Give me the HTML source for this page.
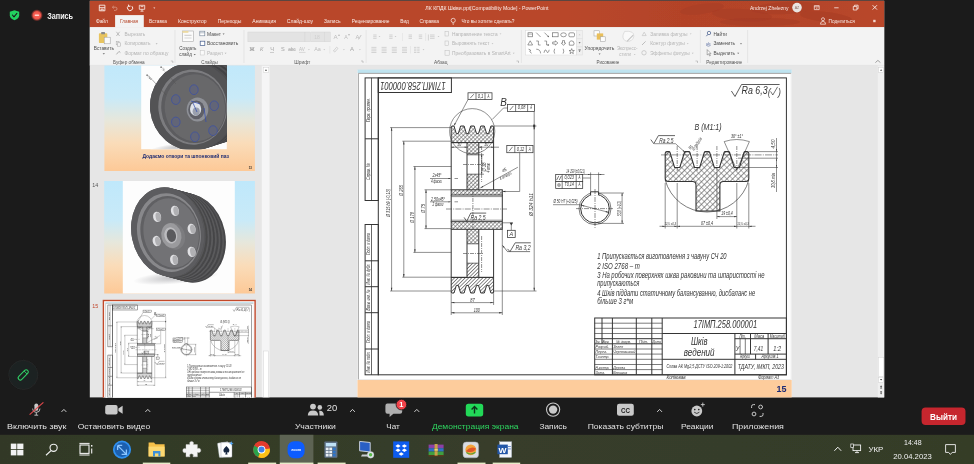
<!DOCTYPE html>
<html lang="ru"><head><meta charset="utf-8"><title>Zoom - PowerPoint</title>
<style>
html,body{margin:0;padding:0;background:#1b1b1b;overflow:hidden}
svg{display:block;font-family:'Liberation Sans', sans-serif}
text{font-family:"Liberation Sans",sans-serif}
</style></head><body>
<svg width="974" height="464" viewBox="0 0 974 464">
<rect x="0.0" y="0.0" width="974.0" height="464.0" fill="#1b1b1b" />
<defs><filter id="soft" x="0" y="0" width="974" height="464" filterUnits="userSpaceOnUse"><feGaussianBlur stdDeviation="0.45"/></filter><filter id="soft2" x="0" y="0" width="974" height="464" filterUnits="userSpaceOnUse"><feGaussianBlur stdDeviation="0.3"/></filter></defs>
<g id="ppt" filter="url(#soft)">
<rect x="89.8" y="0.8" width="794.4" height="396.6" fill="#e6e6e6" />
<defs><linearGradient id="tb" x1="0" x2="1"><stop offset="0" stop-color="#b9472b"/><stop offset="0.6" stop-color="#b9472b"/><stop offset="0.75" stop-color="#b34328"/><stop offset="0.92" stop-color="#b54529"/><stop offset="1" stop-color="#b9472b"/></linearGradient></defs>
<rect x="89.8" y="0.8" width="794.4" height="26.4" fill="url(#tb)" />
<ellipse cx="702" cy="9" rx="22" ry="5" fill="#a53d24" opacity="0.55" transform="rotate(-8 702 9)"/>
<ellipse cx="742" cy="15" rx="30" ry="6" fill="#a53d24" opacity="0.55" transform="rotate(4 742 15)"/>
<ellipse cx="786" cy="8" rx="34" ry="6" fill="#a53d24" opacity="0.55" transform="rotate(-3 786 8)"/>
<ellipse cx="826" cy="17" rx="26" ry="5" fill="#a53d24" opacity="0.55" transform="rotate(6 826 17)"/>
<ellipse cx="760" cy="22" rx="40" ry="4" fill="#a53d24" opacity="0.55" transform="rotate(0 760 22)"/>
<path d="M99.3 5.2H104.9V10.8H99.3Z M99.3 7.7H104.9 M101 10.8V9.2H103.2V10.8" fill="none" stroke="#fbeee9" stroke-width="0.9" />
<path d="M112.5 7.2H115.4Q117 7.2 117 8.8Q117 10.4 115.4 10.4H114 M113.8 5.9L112.4 7.2L113.8 8.5" fill="none" stroke="#d99a88" stroke-width="0.8" />
<path d="M131.9 6.2A2.6 2.6 0 1 1 128.6 5.9 M128.4 4.6L128.7 6.4L130.5 6.1" fill="none" stroke="#fbeee9" stroke-width="1" />
<path d="M139.3 5.3H144.7V9.3H139.3Z M142 9.3V11 M140.5 11.2H143.5 M140.6 6.6H143.4" fill="none" stroke="#fbeee9" stroke-width="0.8" />
<path d="M153.3 7.6H155.3L154.3 8.8Z" fill="#fbeee9" stroke="none" stroke-width="0.6" />
<text x="425.3" y="10.1" font-size="5.6" fill="#fbeee9" textLength="123.2" lengthAdjust="spacingAndGlyphs" >ЛК КПДК Шківи.ppt[Compatibility Mode]  -  PowerPoint</text>
<text x="750.0" y="9.9" font-size="5.6" fill="#fbeee9" textLength="38.6" lengthAdjust="spacingAndGlyphs" >Andrzej Zhelezny</text>
<circle cx="797.0" cy="7.6" r="4.8" fill="#e9e4e1" />
<text x="797.0" y="9.2" font-size="3.6" fill="#8a6a60" text-anchor="middle" >AZ</text>
<path d="M814.3 5.6H819.2V9.6H814.3Z M814.3 6.8H819.2 M816.8 7.6V9" fill="none" stroke="#fbeee9" stroke-width="0.7" />
<line x1="834.2" y1="7.8" x2="838.6" y2="7.8" stroke="#fbeee9" stroke-width="0.8" />
<path d="M853.3 6.4H856.9V10H853.3Z M854.5 6.4V5.2H858.1V8.8H856.9" fill="none" stroke="#fbeee9" stroke-width="0.8" />
<path d="M872.6 5.2L877 9.6M877 5.2L872.6 9.6" fill="none" stroke="#fbeee9" stroke-width="0.9" />
<rect x="115.1" y="15.1" width="28.7" height="12.5" fill="#f3f3f3" />
<text x="95.9" y="23.4" font-size="5.5" fill="#fbeee9" textLength="12.1" lengthAdjust="spacingAndGlyphs" >Файл</text>
<text x="120.0" y="23.4" font-size="5.5" fill="#b7472a" textLength="18.1" lengthAdjust="spacingAndGlyphs" >Главная</text>
<text x="149.1" y="23.4" font-size="5.5" fill="#fbeee9" textLength="17.7" lengthAdjust="spacingAndGlyphs" >Вставка</text>
<text x="178.0" y="23.4" font-size="5.5" fill="#fbeee9" textLength="28.6" lengthAdjust="spacingAndGlyphs" >Конструктор</text>
<text x="217.7" y="23.4" font-size="5.5" fill="#fbeee9" textLength="23.8" lengthAdjust="spacingAndGlyphs" >Переходы</text>
<text x="252.3" y="23.4" font-size="5.5" fill="#fbeee9" textLength="23.8" lengthAdjust="spacingAndGlyphs" >Анимация</text>
<text x="286.8" y="23.4" font-size="5.5" fill="#fbeee9" textLength="26.3" lengthAdjust="spacingAndGlyphs" >Слайд-шоу</text>
<text x="324.1" y="23.4" font-size="5.5" fill="#fbeee9" textLength="16.4" lengthAdjust="spacingAndGlyphs" >Запись</text>
<text x="351.7" y="23.4" font-size="5.5" fill="#fbeee9" textLength="37.8" lengthAdjust="spacingAndGlyphs" >Рецензирование</text>
<text x="400.2" y="23.4" font-size="5.5" fill="#fbeee9" textLength="8.7" lengthAdjust="spacingAndGlyphs" >Вид</text>
<text x="419.6" y="23.4" font-size="5.5" fill="#fbeee9" textLength="19.4" lengthAdjust="spacingAndGlyphs" >Справка</text>
<text x="461.4" y="23.4" font-size="5.5" fill="#fbeee9" textLength="53.1" lengthAdjust="spacingAndGlyphs" >Что вы хотите сделать?</text>
<circle cx="453.2" cy="20.4" r="2.1" fill="none" stroke="#fbeee9" stroke-width="0.7" />
<path d="M452.3 23.2H454.2M452.6 24.4H453.9" fill="none" stroke="#fbeee9" stroke-width="0.6" />
<circle cx="823.0" cy="19.2" r="1.5" fill="none" stroke="#fbeee9" stroke-width="0.7" />
<path d="M820.4 24.2Q820.4 21.4 823 21.4Q825.6 21.4 825.6 24.2Z" fill="none" stroke="#fbeee9" stroke-width="0.7" />
<text x="828.6" y="22.9" font-size="5.5" fill="#fbeee9" textLength="26.1" lengthAdjust="spacingAndGlyphs" >Поделиться</text>
<rect x="873.2" y="19.8" width="2.4" height="2.4" fill="#f3d9cf" />
<rect x="89.8" y="27.2" width="794.4" height="38.0" fill="#f3f3f3" />
<line x1="89.8" y1="65.3" x2="884.2" y2="65.3" stroke="#e0e0e0" stroke-width="0.6" />
<line x1="175.0" y1="30.0" x2="175.0" y2="63.0" stroke="#dcdcdc" stroke-width="0.6" />
<line x1="244.0" y1="30.0" x2="244.0" y2="63.0" stroke="#dcdcdc" stroke-width="0.6" />
<line x1="366.1" y1="30.0" x2="366.1" y2="63.0" stroke="#dcdcdc" stroke-width="0.6" />
<line x1="521.4" y1="30.0" x2="521.4" y2="63.0" stroke="#dcdcdc" stroke-width="0.6" />
<line x1="700.4" y1="30.0" x2="700.4" y2="63.0" stroke="#dcdcdc" stroke-width="0.6" />
<line x1="747.6" y1="30.0" x2="747.6" y2="63.0" stroke="#dcdcdc" stroke-width="0.6" />
<text x="113.0" y="64.0" font-size="4.9" fill="#555" textLength="31.7" lengthAdjust="spacingAndGlyphs" >Буфер обмена</text>
<text x="201.3" y="64.0" font-size="4.9" fill="#555" textLength="16.5" lengthAdjust="spacingAndGlyphs" >Слайды</text>
<text x="294.2" y="64.0" font-size="4.9" fill="#555" textLength="16.1" lengthAdjust="spacingAndGlyphs" >Шрифт</text>
<text x="434.0" y="64.0" font-size="4.9" fill="#555" textLength="13.5" lengthAdjust="spacingAndGlyphs" >Абзац</text>
<text x="596.4" y="64.0" font-size="4.9" fill="#555" textLength="22.9" lengthAdjust="spacingAndGlyphs" >Рисование</text>
<text x="706.2" y="64.0" font-size="4.9" fill="#555" textLength="36.0" lengthAdjust="spacingAndGlyphs" >Редактирование</text>
<path d="M170.8 61H172.8V63" fill="none" stroke="#999" stroke-width="0.5" />
<path d="M361 61H363V63" fill="none" stroke="#999" stroke-width="0.5" />
<path d="M516.5 61H518.5V63" fill="none" stroke="#999" stroke-width="0.5" />
<path d="M695.5 61H697.5V63" fill="none" stroke="#999" stroke-width="0.5" />
<rect x="98.9" y="33.2" width="8.4" height="9.8" fill="#e8c45e" rx="0.8" />
<rect x="101.2" y="32.0" width="3.8" height="2.2" fill="#8a8a8a" rx="0.5" />
<rect x="104.2" y="37.2" width="6.0" height="6.6" fill="#fafafa" stroke="#9a9a9a" stroke-width="0.5" />
<text x="93.7" y="50.0" font-size="5.5" fill="#4a4a4a" textLength="20.3" lengthAdjust="spacingAndGlyphs" >Вставить</text>
<path d="M102.6 53.2H105L103.8 54.6Z" fill="#666" stroke="none" stroke-width="0.6" />
<path d="M116.4 31.8L119.6 36M119.6 31.8L116.4 36" fill="none" stroke="#9a9a9a" stroke-width="0.6" />
<text x="124.5" y="35.6" font-size="5.5" fill="#b4b4b4" textLength="20.7" lengthAdjust="spacingAndGlyphs" >Вырезать</text>
<rect x="116.2" y="41.4" width="2.8" height="3.4" fill="none" stroke="#a8a8a8" stroke-width="0.5" />
<rect x="117.6" y="42.8" width="2.8" height="3.4" fill="#f3f3f3" stroke="#a8a8a8" stroke-width="0.5" />
<text x="124.5" y="45.1" font-size="5.5" fill="#b4b4b4" textLength="25.9" lengthAdjust="spacingAndGlyphs" >Копировать</text>
<path d="M155.6 43.2H157.6L156.6 44.4Z" fill="#b4b4b4" stroke="none" stroke-width="0.6" />
<path d="M116.4 54.4L119 51.4L120.4 52.6" fill="none" stroke="#a8a8a8" stroke-width="0.9" />
<text x="124.5" y="54.8" font-size="5.5" fill="#b4b4b4" textLength="44.0" lengthAdjust="spacingAndGlyphs" >Формат по образцу</text>
<rect x="182.4" y="31.0" width="11.2" height="10.6" fill="#fbfbfb" stroke="#a9a9a9" stroke-width="0.6" />
<rect x="182.4" y="31.0" width="6.0" height="1.8" fill="#ecd9a0" />
<line x1="184.4" y1="35.3" x2="191.6" y2="35.3" stroke="#b5b5b5" stroke-width="0.7" />
<line x1="184.4" y1="38.0" x2="191.6" y2="38.0" stroke="#c9c9c9" stroke-width="0.7" />
<text x="179.2" y="50.0" font-size="5.5" fill="#4a4a4a" textLength="17.2" lengthAdjust="spacingAndGlyphs" >Создать</text>
<text x="179.2" y="56.1" font-size="5.5" fill="#4a4a4a" textLength="12.6" lengthAdjust="spacingAndGlyphs" >слайд</text>
<path d="M193.6 54H195.8L194.7 55.3Z" fill="#666" stroke="none" stroke-width="0.6" />
<rect x="199.8" y="31.2" width="5.0" height="4.6" fill="#fff" stroke="#6f7f92" stroke-width="0.6" />
<line x1="199.8" y1="32.8" x2="204.8" y2="32.8" stroke="#6f7f92" stroke-width="0.5" />
<text x="207.1" y="35.6" font-size="5.5" fill="#4a4a4a" textLength="13.9" lengthAdjust="spacingAndGlyphs" >Макет</text>
<path d="M222.6 33.5H224.6L223.6 34.7Z" fill="#666" stroke="none" stroke-width="0.6" />
<rect x="200.2" y="41.2" width="4.6" height="4.4" fill="#fff" stroke="#41598a" stroke-width="0.7" />
<text x="207.1" y="45.1" font-size="5.5" fill="#4a4a4a" textLength="31.2" lengthAdjust="spacingAndGlyphs" >Восстановить</text>
<rect x="200.2" y="50.6" width="4.0" height="4.4" fill="#fbfbfb" stroke="#c2c2c2" stroke-width="0.5" />
<text x="207.1" y="54.8" font-size="5.5" fill="#b4b4b4" textLength="15.6" lengthAdjust="spacingAndGlyphs" >Раздел</text>
<path d="M224.6 52.8H226.6L225.6 54Z" fill="#b4b4b4" stroke="none" stroke-width="0.6" />
<rect x="247.9" y="32.0" width="62.7" height="9.8" fill="#e3e3e3" stroke="#d2d2d2" stroke-width="0.4" />
<rect x="311.8" y="32.0" width="18.5" height="9.8" fill="#e3e3e3" stroke="#d2d2d2" stroke-width="0.4" />
<line x1="304.8" y1="32.0" x2="304.8" y2="41.8" stroke="#cfcfcf" stroke-width="0.4" />
<line x1="324.6" y1="32.0" x2="324.6" y2="41.8" stroke="#cfcfcf" stroke-width="0.4" />
<text x="314.2" y="38.9" font-size="5" fill="#cfcfcf" >18</text>
<text x="333.6" y="39.2" font-size="6.2" fill="#bdbdbd" >A</text>
<text x="337.8" y="36.0" font-size="3.5" fill="#bdbdbd" >▴</text>
<text x="344.2" y="39.2" font-size="5.2" fill="#bdbdbd" >A</text>
<text x="347.9" y="36.0" font-size="3.5" fill="#bdbdbd" >▾</text>
<text x="355.6" y="39.4" font-size="5.8" fill="#bdbdbd" >A</text>
<path d="M358.6 39.4L361.2 35" fill="none" stroke="#bdbdbd" stroke-width="0.8" />
<text x="249.4" y="51.4" font-size="5.6" fill="#9c9c9c" font-weight="bold" >Ж</text>
<text x="260.0" y="51.4" font-size="5.6" fill="#a5a5a5" font-style="italic" >К</text>
<text x="270.2" y="51.4" font-size="5.6" fill="#a5a5a5" >Ч</text>
<line x1="270.0" y1="52.5" x2="274.0" y2="52.5" stroke="#a5a5a5" stroke-width="0.5" />
<text x="281.0" y="51.4" font-size="5.6" fill="#a5a5a5" >S</text>
<text x="288.2" y="51.4" font-size="4.6" fill="#a5a5a5" >abc</text>
<line x1="288.0" y1="49.8" x2="296.0" y2="49.8" stroke="#a5a5a5" stroke-width="0.4" />
<text x="299.0" y="50.8" font-size="4.6" fill="#bdbdbd" >AV</text>
<line x1="299.0" y1="52.4" x2="305.5" y2="52.4" stroke="#bdbdbd" stroke-width="0.5" />
<path d="M308 49.2H309.8L308.9 50.3Z" fill="#bdbdbd" stroke="none" stroke-width="0.6" />
<text x="314.2" y="51.4" font-size="5.4" fill="#bdbdbd" >Aa</text>
<path d="M323.4 49.2H325.2L324.3 50.3Z" fill="#bdbdbd" stroke="none" stroke-width="0.6" />
<line x1="329.8" y1="46.0" x2="329.8" y2="53.5" stroke="#dcdcdc" stroke-width="0.5" />
<path d="M333.4 51L336.6 47.2L338 48.4L334.8 52Z" fill="none" stroke="#bdbdbd" stroke-width="0.6" />
<path d="M343 49.2H344.8L343.9 50.3Z" fill="#bdbdbd" stroke="none" stroke-width="0.6" />
<text x="350.0" y="51.4" font-size="6" fill="#a8a8a8" >A</text>
<path d="M359 49.2H360.8L359.9 50.3Z" fill="#bdbdbd" stroke="none" stroke-width="0.6" />
<line x1="373.2" y1="35.0" x2="376.6" y2="35.0" stroke="#bdbdbd" stroke-width="0.6" /><line x1="373.2" y1="36.7" x2="376.6" y2="36.7" stroke="#bdbdbd" stroke-width="0.6" /><line x1="373.2" y1="38.4" x2="376.6" y2="38.4" stroke="#bdbdbd" stroke-width="0.6" />
<path d="M378.6 36H380.4L379.5 37.1Z" fill="#bdbdbd" stroke="none" stroke-width="0.6" />
<line x1="389.2" y1="35.0" x2="392.6" y2="35.0" stroke="#bdbdbd" stroke-width="0.6" /><line x1="389.2" y1="36.7" x2="392.6" y2="36.7" stroke="#bdbdbd" stroke-width="0.6" /><line x1="389.2" y1="38.4" x2="392.6" y2="38.4" stroke="#bdbdbd" stroke-width="0.6" />
<path d="M394.6 36H396.4L395.5 37.1Z" fill="#bdbdbd" stroke="none" stroke-width="0.6" />
<line x1="408.6" y1="35.0" x2="412.0" y2="35.0" stroke="#bdbdbd" stroke-width="0.6" /><line x1="408.6" y1="36.7" x2="412.0" y2="36.7" stroke="#bdbdbd" stroke-width="0.6" /><line x1="408.6" y1="38.4" x2="412.0" y2="38.4" stroke="#bdbdbd" stroke-width="0.6" />
<line x1="418.8" y1="35.0" x2="422.2" y2="35.0" stroke="#bdbdbd" stroke-width="0.6" /><line x1="418.8" y1="36.7" x2="422.2" y2="36.7" stroke="#bdbdbd" stroke-width="0.6" /><line x1="418.8" y1="38.4" x2="422.2" y2="38.4" stroke="#bdbdbd" stroke-width="0.6" />
<line x1="402.5" y1="33.0" x2="402.5" y2="41.0" stroke="#dcdcdc" stroke-width="0.5" />
<line x1="425.6" y1="33.0" x2="425.6" y2="41.0" stroke="#dcdcdc" stroke-width="0.5" />
<line x1="430.0" y1="35.0" x2="434.6" y2="35.0" stroke="#bdbdbd" stroke-width="0.6" /><line x1="430.0" y1="36.7" x2="434.6" y2="36.7" stroke="#bdbdbd" stroke-width="0.6" /><line x1="430.0" y1="38.4" x2="434.6" y2="38.4" stroke="#bdbdbd" stroke-width="0.6" />
<path d="M428.4 34.5V40.5" fill="none" stroke="#bdbdbd" stroke-width="0.6" />
<path d="M437.6 36H439.4L438.5 37.1Z" fill="#bdbdbd" stroke="none" stroke-width="0.6" />
<line x1="371.4" y1="47.4" x2="376.4" y2="47.4" stroke="#bdbdbd" stroke-width="0.6" /><line x1="371.4" y1="49.1" x2="376.4" y2="49.1" stroke="#bdbdbd" stroke-width="0.6" /><line x1="371.4" y1="50.8" x2="376.4" y2="50.8" stroke="#bdbdbd" stroke-width="0.6" /><line x1="371.4" y1="52.5" x2="376.4" y2="52.5" stroke="#bdbdbd" stroke-width="0.6" />
<line x1="381.6" y1="47.4" x2="386.6" y2="47.4" stroke="#bdbdbd" stroke-width="0.6" /><line x1="381.6" y1="49.1" x2="386.6" y2="49.1" stroke="#bdbdbd" stroke-width="0.6" /><line x1="381.6" y1="50.8" x2="386.6" y2="50.8" stroke="#bdbdbd" stroke-width="0.6" /><line x1="381.6" y1="52.5" x2="386.6" y2="52.5" stroke="#bdbdbd" stroke-width="0.6" />
<line x1="391.8" y1="47.4" x2="396.8" y2="47.4" stroke="#bdbdbd" stroke-width="0.6" /><line x1="391.8" y1="49.1" x2="396.8" y2="49.1" stroke="#bdbdbd" stroke-width="0.6" /><line x1="391.8" y1="50.8" x2="396.8" y2="50.8" stroke="#bdbdbd" stroke-width="0.6" /><line x1="391.8" y1="52.5" x2="396.8" y2="52.5" stroke="#bdbdbd" stroke-width="0.6" />
<line x1="402.0" y1="47.4" x2="407.0" y2="47.4" stroke="#bdbdbd" stroke-width="0.6" /><line x1="402.0" y1="49.1" x2="407.0" y2="49.1" stroke="#bdbdbd" stroke-width="0.6" /><line x1="402.0" y1="50.8" x2="407.0" y2="50.8" stroke="#bdbdbd" stroke-width="0.6" /><line x1="402.0" y1="52.5" x2="407.0" y2="52.5" stroke="#bdbdbd" stroke-width="0.6" />
<line x1="410.5" y1="46.0" x2="410.5" y2="53.5" stroke="#dcdcdc" stroke-width="0.5" />
<line x1="414.0" y1="47.4" x2="416.4" y2="47.4" stroke="#bdbdbd" stroke-width="0.6" /><line x1="414.0" y1="49.1" x2="416.4" y2="49.1" stroke="#bdbdbd" stroke-width="0.6" /><line x1="414.0" y1="50.8" x2="416.4" y2="50.8" stroke="#bdbdbd" stroke-width="0.6" /><line x1="414.0" y1="52.5" x2="416.4" y2="52.5" stroke="#bdbdbd" stroke-width="0.6" />
<line x1="417.2" y1="47.4" x2="419.6" y2="47.4" stroke="#bdbdbd" stroke-width="0.6" /><line x1="417.2" y1="49.1" x2="419.6" y2="49.1" stroke="#bdbdbd" stroke-width="0.6" /><line x1="417.2" y1="50.8" x2="419.6" y2="50.8" stroke="#bdbdbd" stroke-width="0.6" /><line x1="417.2" y1="52.5" x2="419.6" y2="52.5" stroke="#bdbdbd" stroke-width="0.6" />
<path d="M422.6 49.2H424.4L423.5 50.3Z" fill="#bdbdbd" stroke="none" stroke-width="0.6" />
<rect x="445.0" y="31.4" width="3.6" height="4.6" fill="none" stroke="#bdbdbd" stroke-width="0.5" />
<text x="452.1" y="35.6" font-size="5.5" fill="#b4b4b4" textLength="45.5" lengthAdjust="spacingAndGlyphs" >Направление текста</text>
<path d="M499.6 33.5H501.4L500.5 34.6Z" fill="#bdbdbd" stroke="none" stroke-width="0.6" />
<rect x="445.0" y="41.0" width="3.6" height="4.6" fill="none" stroke="#bdbdbd" stroke-width="0.5" />
<text x="452.1" y="45.1" font-size="5.5" fill="#b4b4b4" textLength="37.3" lengthAdjust="spacingAndGlyphs" >Выровнять текст</text>
<path d="M491.6 43.2H493.4L492.5 44.3Z" fill="#bdbdbd" stroke="none" stroke-width="0.6" />
<rect x="445.0" y="50.6" width="4.2" height="4.6" fill="none" stroke="#bdbdbd" stroke-width="0.5" />
<text x="452.1" y="54.8" font-size="5.5" fill="#b4b4b4" textLength="58.6" lengthAdjust="spacingAndGlyphs" >Преобразовать в SmartArt</text>
<path d="M512.8 52.8H514.6L513.7 53.9Z" fill="#bdbdbd" stroke="none" stroke-width="0.6" />
<rect x="525.7" y="30.4" width="51.0" height="24.6" fill="#fff" stroke="#d9d9d9" stroke-width="0.5" />
<rect x="576.7" y="30.4" width="5.7" height="24.6" fill="#f0f0f0" stroke="#d9d9d9" stroke-width="0.5" />
<line x1="576.7" y1="38.6" x2="582.4" y2="38.6" stroke="#d9d9d9" stroke-width="0.5" />
<line x1="576.7" y1="46.8" x2="582.4" y2="46.8" stroke="#d9d9d9" stroke-width="0.5" />
<path d="M578.6 35.2H580.6L579.6 33.9Z" fill="#c8c8c8" stroke="none" stroke-width="0.6" />
<path d="M578.6 42.2H580.6L579.6 43.5Z" fill="#555" stroke="none" stroke-width="0.6" />
<path d="M578.6 50.6H580.6L579.6 51.9Z" fill="#555" stroke="none" stroke-width="0.6" />
<line x1="578.4" y1="49.6" x2="580.8" y2="49.6" stroke="#555" stroke-width="0.5" />
<rect x="528.0" y="32.8" width="4.4" height="4.0" fill="none" stroke="#5a5a5a" stroke-width="0.6" />
<line x1="528.0" y1="34.2" x2="532.4" y2="34.2" stroke="#5a5a5a" stroke-width="0.4" />
<line x1="536.2" y1="32.6" x2="540.6" y2="37.0" stroke="#5a5a5a" stroke-width="0.6" />
<line x1="544.4" y1="32.6" x2="548.8" y2="37.0" stroke="#5a5a5a" stroke-width="0.6" />
<path d="M549.0 37.199999999999996l-1.8 -0.4l1.4 -1.4Z" fill="#5a5a5a" stroke="none" stroke-width="0.6" />
<rect x="552.5" y="32.8" width="5.6" height="4.0" fill="none" stroke="#5a5a5a" stroke-width="0.6" />
<ellipse cx="563.5" cy="34.8" rx="2.8" ry="2" fill="none" stroke="#5a5a5a" stroke-width="0.6"/>
<rect x="568.9" y="32.8" width="5.6" height="4.0" fill="none" stroke="#5a5a5a" stroke-width="0.6" rx="1.2" />
<path d="M530.2 40.8L532.6 45H527.8000000000001Z" fill="none" stroke="#5a5a5a" stroke-width="0.6" />
<path d="M536.1999999999999 41H538.4V45H540.6" fill="none" stroke="#5a5a5a" stroke-width="0.6" />
<path d="M544.4 41H546.6V45H548.8000000000001" fill="none" stroke="#5a5a5a" stroke-width="0.6" />
<path d="M549.2 45l-1.4 -1v2Z" fill="#5a5a5a" stroke="none" stroke-width="0.6" />
<path d="M552.6999999999999 42H555.3V40.8L557.9 43L555.3 45.2V44H552.6999999999999Z" fill="none" stroke="#5a5a5a" stroke-width="0.6" />
<path d="M562.5 40.6H564.5V43H565.7L563.5 45.4L561.3 43H562.5Z" fill="none" stroke="#5a5a5a" stroke-width="0.6" />
<path d="M569.3000000000001 42L571.1 40.8L573.3000000000001 41.4L574.1 43.6L573.5 45.2H569.3000000000001Z" fill="none" stroke="#5a5a5a" stroke-width="0.6" />
<path d="M528.6 49.2L530.6 50.2L529.8000000000001 51.6L531.6 53.2" fill="none" stroke="#5a5a5a" stroke-width="0.7" />
<path d="M536.1999999999999 49.2Q540.4 49.2 540.6 53.400000000000006" fill="none" stroke="#5a5a5a" stroke-width="0.6" />
<path d="M544.0 52.800000000000004Q545.2 47.800000000000004 546.6 51.2T549.2 49.800000000000004" fill="none" stroke="#5a5a5a" stroke-width="0.6" />
<path d="M554.6999999999999 48.800000000000004Q553.3 51.2 554.6999999999999 53.6" fill="none" stroke="#5a5a5a" stroke-width="0.6" />
<path d="M563.1 48.800000000000004Q564.5 51.2 563.1 53.6" fill="none" stroke="#5a5a5a" stroke-width="0.6" />
<path d="M571.70 48.60L572.38 50.47L574.36 50.53L572.79 51.76L573.35 53.67L571.70 52.55L570.05 53.67L570.61 51.76L569.04 50.53L571.02 50.47Z" fill="none" stroke="#5a5a5a" stroke-width="0.6" />
<rect x="594.0" y="30.8" width="5.6" height="5.2" fill="#fdfdfd" stroke="#9a9a9a" stroke-width="0.5" />
<rect x="596.8" y="33.4" width="6.4" height="6.2" fill="#e9bf5a" />
<rect x="600.4" y="36.8" width="4.8" height="4.8" fill="#fdfdfd" stroke="#9a9a9a" stroke-width="0.5" />
<text x="584.5" y="50.0" font-size="5.5" fill="#4a4a4a" textLength="29.9" lengthAdjust="spacingAndGlyphs" >Упорядочить</text>
<path d="M598.6 53.6H600.6L599.6 54.8Z" fill="#666" stroke="none" stroke-width="0.6" />
<path d="M624.6 31.4Q634.4 30.4 633.8 36.4Q632.6 42 626.4 41.2Q622.4 40 623 35Z" fill="#f9f9f9" stroke="#cfcfcf" stroke-width="0.6" />
<path d="M627 41.4L633.2 35.2" fill="none" stroke="#c4c4c4" stroke-width="1.1" />
<text x="616.9" y="50.0" font-size="5.5" fill="#b4b4b4" textLength="20.5" lengthAdjust="spacingAndGlyphs" >Экспресс-</text>
<text x="619.3" y="56.1" font-size="5.5" fill="#b4b4b4" textLength="11.8" lengthAdjust="spacingAndGlyphs" >стили</text>
<path d="M633.8 54H635.6L634.7 55.1Z" fill="#bdbdbd" stroke="none" stroke-width="0.6" />
<path d="M642.2 35.6L644.2 32.2L646.2 35.6Z" fill="none" stroke="#bdbdbd" stroke-width="0.6" />
<text x="650.2" y="35.6" font-size="5.5" fill="#b4b4b4" textLength="37.4" lengthAdjust="spacingAndGlyphs" >Заливка фигуры</text>
<path d="M689.8 33.5H691.6L690.7 34.6Z" fill="#bdbdbd" stroke="none" stroke-width="0.6" />
<path d="M642 45L645.6 41.4" fill="none" stroke="#bdbdbd" stroke-width="1" />
<text x="650.2" y="45.1" font-size="5.5" fill="#b4b4b4" textLength="34.5" lengthAdjust="spacingAndGlyphs" >Контур фигуры</text>
<path d="M686.8 43.2H688.6L687.7 44.3Z" fill="#bdbdbd" stroke="none" stroke-width="0.6" />
<circle cx="644.0" cy="52.8" r="2.2" fill="none" stroke="#bdbdbd" stroke-width="0.7" />
<text x="650.2" y="54.8" font-size="5.5" fill="#b4b4b4" textLength="39.4" lengthAdjust="spacingAndGlyphs" >Эффекты фигуры</text>
<path d="M691.8 52.8H693.6L692.7 53.9Z" fill="#bdbdbd" stroke="none" stroke-width="0.6" />
<circle cx="709.0" cy="33.0" r="1.7" fill="none" stroke="#41598a" stroke-width="0.7" />
<line x1="707.8" y1="34.4" x2="706.4" y2="36.2" stroke="#41598a" stroke-width="0.8" />
<text x="713.4" y="35.6" font-size="5.5" fill="#4a4a4a" textLength="13.6" lengthAdjust="spacingAndGlyphs" >Найти</text>
<text x="706.0" y="44.7" font-size="4" fill="#5b6fa3" >ab</text>
<path d="M706.2 45.4Q708.4 47 710.6 45.4" fill="none" stroke="#5b6fa3" stroke-width="0.6" />
<text x="713.4" y="45.1" font-size="5.5" fill="#4a4a4a" textLength="21.6" lengthAdjust="spacingAndGlyphs" >Заменить</text>
<path d="M740 43.2H742L741 44.4Z" fill="#666" stroke="none" stroke-width="0.6" />
<path d="M707.2 49.6V55L708.6 53.8L709.6 56L710.4 55.6L709.4 53.6H711Z" fill="#fff" stroke="#666" stroke-width="0.5" />
<text x="713.4" y="54.8" font-size="5.5" fill="#4a4a4a" textLength="21.6" lengthAdjust="spacingAndGlyphs" >Выделить</text>
<path d="M737.2 52.8H739.2L738.2 54Z" fill="#666" stroke="none" stroke-width="0.6" />
<path d="M875.4 62.6L877.9 60.4L880.4 62.6" fill="none" stroke="#666" stroke-width="0.6" />
<defs><linearGradient id="sg" x1="0" x2="0" y1="0" y2="1"><stop offset="0" stop-color="#bfe8fb"/><stop offset="0.35" stop-color="#c9eaf8"/><stop offset="0.55" stop-color="#e7e7db"/><stop offset="0.75" stop-color="#fadcb9"/><stop offset="1" stop-color="#fdc997"/></linearGradient><clipPath id="panel"><rect x="89.8" y="65.6" width="180" height="331.8"/></clipPath><clipPath id="im13"><rect x="141.2" y="58.4" width="85.6" height="90.8"/></clipPath><clipPath id="im14"><rect x="122.8" y="181" width="112" height="112.5"/></clipPath><radialGradient id="sh"><stop offset="0" stop-color="#bdbdc0"/><stop offset="1" stop-color="#fdfdfd"/></radialGradient></defs>
<g clip-path="url(#panel)">
<rect x="261.8" y="65.6" width="8.3" height="331.8" fill="#f5f5f6" />
<line x1="270.2" y1="65.6" x2="270.2" y2="397.4" stroke="#d6d6d6" stroke-width="0.6" />
<rect x="263.2" y="67.4" width="5.6" height="5.0" fill="#fff" stroke="#c8c8c8" stroke-width="0.4" />
<path d="M264.8 70.8H267.2L266 69.2Z" fill="#444" stroke="none" stroke-width="0.6" />
<rect x="263.4" y="351.0" width="5.2" height="46.4" fill="#fff" stroke="#c9c9c9" stroke-width="0.4" />
<rect x="104.4" y="58.4" width="150.5" height="112.6" fill="url(#sg)" />
<rect x="141.2" y="58.4" width="85.6" height="90.8" fill="#fdfdfd" />
<g clip-path="url(#im13)">
<ellipse cx="180.0" cy="147.0" rx="30.0" ry="4.0" fill="url(#sh)" transform="rotate(-6 180.0 147.0)" />
<ellipse cx="214.5" cy="99.5" rx="42.5" ry="44.0" fill="rgb(66,66,68)" transform="rotate(-6 214.5 99.5)" />
<ellipse cx="212.3" cy="100.2" rx="42.5" ry="44.0" fill="rgb(80,80,82)" transform="rotate(-6 212.3 100.2)" />
<ellipse cx="210.1" cy="100.9" rx="42.5" ry="44.0" fill="rgb(64,64,66)" transform="rotate(-6 210.1 100.9)" />
<ellipse cx="207.9" cy="101.6" rx="42.5" ry="44.0" fill="rgb(84,84,86)" transform="rotate(-6 207.9 101.6)" />
<ellipse cx="205.7" cy="102.3" rx="42.5" ry="44.0" fill="rgb(66,66,68)" transform="rotate(-6 205.7 102.3)" />
<ellipse cx="203.5" cy="103.0" rx="42.5" ry="44.0" fill="rgb(84,84,86)" transform="rotate(-6 203.5 103.0)" />
<ellipse cx="201.3" cy="103.7" rx="42.5" ry="44.0" fill="rgb(64,64,66)" transform="rotate(-6 201.3 103.7)" />
<ellipse cx="199.1" cy="104.4" rx="42.5" ry="44.0" fill="rgb(82,82,84)" transform="rotate(-6 199.1 104.4)" />
<ellipse cx="196.9" cy="105.1" rx="42.5" ry="44.0" fill="rgb(66,66,68)" transform="rotate(-6 196.9 105.1)" />
<ellipse cx="194.7" cy="105.8" rx="42.5" ry="44.0" fill="rgb(78,78,80)" transform="rotate(-6 194.7 105.8)" />
<ellipse cx="192.5" cy="106.5" rx="42.5" ry="44.0" fill="rgb(86,86,88)" transform="rotate(-6 192.5 106.5)" />
<ellipse cx="192.5" cy="106.5" rx="42.5" ry="44.0" fill="#525255" transform="rotate(-6 192.5 106.5)" />
<ellipse cx="192.7" cy="107.1" rx="34.4" ry="37.6" fill="#7c7c7f" transform="rotate(-6 192.7 107.1)" />
<ellipse cx="193.7" cy="107.5" rx="32.4" ry="35.6" fill="#5b5b5e" transform="rotate(-6 193.7 107.5)" />
<ellipse cx="194.9" cy="107.9" rx="30.2" ry="33.6" fill="#68686b" transform="rotate(-6 194.9 107.9)" />
<ellipse cx="175.8" cy="99.6" rx="4.3" ry="4.9" fill="#626577" stroke="#3a4fa6" stroke-width="0.7"/>
<ellipse cx="193.9" cy="89.7" rx="4.3" ry="4.9" fill="#626577" stroke="#3a4fa6" stroke-width="0.7"/>
<ellipse cx="214.2" cy="105.8" rx="4.3" ry="4.9" fill="#626577" stroke="#3a4fa6" stroke-width="0.7"/>
<ellipse cx="213" cy="130.6" rx="4.3" ry="4.9" fill="#626577" stroke="#3a4fa6" stroke-width="0.7"/>
<ellipse cx="194.9" cy="136.8" rx="4.3" ry="4.9" fill="#626577" stroke="#3a4fa6" stroke-width="0.7"/>
<ellipse cx="175.8" cy="122" rx="4.3" ry="4.9" fill="#626577" stroke="#3a4fa6" stroke-width="0.7"/>
<ellipse cx="197.5" cy="109.6" rx="10.8" ry="12.0" fill="#8e9096" />
<ellipse cx="196.4" cy="109.8" rx="8.2" ry="9.4" fill="#5e6068" />
<ellipse cx="195.6" cy="109.0" rx="5.6" ry="6.8" fill="#dfe3ea" />
<ellipse cx="196.2" cy="111.5" rx="3.6" ry="4.0" fill="#9aa0ae" />
<path d="M191 101L200 104M204 108L206 122M193 103L197 112" fill="none" stroke="#2f49b0" stroke-width="0.7" />
<line x1="152.0" y1="79.5" x2="166.0" y2="95.0" stroke="#555" stroke-width="0.5" />
<line x1="165.0" y1="71.5" x2="176.0" y2="84.0" stroke="#555" stroke-width="0.5" />
<text x="146.0" y="75.4" font-size="3" fill="#333" transform="rotate(47 146.0 75.4)" >⌀265</text>
<text x="160.0" y="67.4" font-size="3" fill="#333" transform="rotate(47 160.0 67.4)" >⌀75</text>
</g>
<text x="142.4" y="157.5" font-size="5.4" fill="#1f2c73" font-weight="bold" textLength="86.7" lengthAdjust="spacingAndGlyphs" >Додаємо отвори та шпонковий паз</text>
<text x="248.8" y="169.2" font-size="2.8" fill="#222" font-weight="bold" >13</text>
<text x="92.2" y="187.4" font-size="5.6" fill="#555" textLength="6.0" lengthAdjust="spacingAndGlyphs" >14</text>
<rect x="104.2" y="181.0" width="150.7" height="112.5" fill="url(#sg)" />
<rect x="122.8" y="181.0" width="112.0" height="112.5" fill="#fdfdfd" />
<g clip-path="url(#im14)">
<ellipse cx="176.0" cy="277.5" rx="43.0" ry="6.5" fill="url(#sh)" transform="rotate(-5 176.0 277.5)" />
<ellipse cx="189.5" cy="238.0" rx="36.0" ry="45.0" fill="rgb(70,70,72)" transform="rotate(-12 189.5 238.0)" />
<ellipse cx="187.7" cy="237.5" rx="36.0" ry="45.0" fill="rgb(84,84,86)" transform="rotate(-12 187.7 237.5)" />
<ellipse cx="185.8" cy="237.0" rx="36.0" ry="45.0" fill="rgb(68,68,70)" transform="rotate(-12 185.8 237.0)" />
<ellipse cx="184.0" cy="236.5" rx="36.0" ry="45.0" fill="rgb(90,90,92)" transform="rotate(-12 184.0 236.5)" />
<ellipse cx="182.2" cy="236.0" rx="36.0" ry="45.0" fill="rgb(70,70,72)" transform="rotate(-12 182.2 236.0)" />
<ellipse cx="180.3" cy="235.5" rx="36.0" ry="45.0" fill="rgb(90,90,92)" transform="rotate(-12 180.3 235.5)" />
<ellipse cx="178.5" cy="235.0" rx="36.0" ry="45.0" fill="rgb(68,68,70)" transform="rotate(-12 178.5 235.0)" />
<ellipse cx="176.7" cy="234.5" rx="36.0" ry="45.0" fill="rgb(90,90,92)" transform="rotate(-12 176.7 234.5)" />
<ellipse cx="174.8" cy="234.0" rx="36.0" ry="45.0" fill="rgb(70,70,72)" transform="rotate(-12 174.8 234.0)" />
<ellipse cx="173.0" cy="233.5" rx="36.0" ry="45.0" fill="rgb(90,90,92)" transform="rotate(-12 173.0 233.5)" />
<ellipse cx="171.2" cy="233.0" rx="36.0" ry="45.0" fill="rgb(72,72,74)" transform="rotate(-12 171.2 233.0)" />
<ellipse cx="169.3" cy="232.5" rx="36.0" ry="45.0" fill="rgb(86,86,88)" transform="rotate(-12 169.3 232.5)" />
<ellipse cx="167.5" cy="232.0" rx="36.0" ry="45.0" fill="rgb(96,96,98)" transform="rotate(-12 167.5 232.0)" />
<ellipse cx="167.5" cy="232.0" rx="36.0" ry="45.0" fill="#5c5c5f" transform="rotate(-12 167.5 232.0)" />
<ellipse cx="168.9" cy="232.6" rx="31.6" ry="39.6" fill="#88888b" transform="rotate(-12 168.9 232.6)" />
<ellipse cx="170.1" cy="232.8" rx="29.4" ry="37.0" fill="#606063" transform="rotate(-12 170.1 232.8)" />
<ellipse cx="171.1" cy="233.0" rx="27.4" ry="35.0" fill="#727275" transform="rotate(-12 171.1 233.0)" />
<ellipse cx="157.1" cy="216.8" rx="4.0" ry="5.2" fill="#e0e0e3" transform="rotate(-12 157.1 216.8)" />
<ellipse cx="158.3" cy="217.1" rx="2.6" ry="4.6" fill="#b0b0b3" transform="rotate(-12 158.3 217.1)" />
<ellipse cx="174.9" cy="210.8" rx="4.0" ry="5.2" fill="#e0e0e3" transform="rotate(-12 174.9 210.8)" />
<ellipse cx="176.1" cy="211.1" rx="2.6" ry="4.6" fill="#b0b0b3" transform="rotate(-12 176.1 211.1)" />
<ellipse cx="191.6" cy="228.9" rx="4.0" ry="5.2" fill="#e0e0e3" transform="rotate(-12 191.6 228.9)" />
<ellipse cx="192.8" cy="229.2" rx="2.6" ry="4.6" fill="#b0b0b3" transform="rotate(-12 192.8 229.2)" />
<ellipse cx="191.6" cy="251.8" rx="4.0" ry="5.2" fill="#e0e0e3" transform="rotate(-12 191.6 251.8)" />
<ellipse cx="192.8" cy="252.1" rx="2.6" ry="4.6" fill="#b0b0b3" transform="rotate(-12 192.8 252.1)" />
<ellipse cx="174.1" cy="259.8" rx="4.0" ry="5.2" fill="#e0e0e3" transform="rotate(-12 174.1 259.8)" />
<ellipse cx="175.3" cy="260.1" rx="2.6" ry="4.6" fill="#b0b0b3" transform="rotate(-12 175.3 260.1)" />
<ellipse cx="156.6" cy="241.0" rx="4.0" ry="5.2" fill="#e0e0e3" transform="rotate(-12 156.6 241.0)" />
<ellipse cx="157.8" cy="241.3" rx="2.6" ry="4.6" fill="#b0b0b3" transform="rotate(-12 157.8 241.3)" />
<ellipse cx="174.4" cy="236.4" rx="10.6" ry="13.4" fill="#7c7c7f" transform="rotate(-12 174.4 236.4)" />
<ellipse cx="171.4" cy="235.6" rx="10.0" ry="12.6" fill="#9a9a9d" transform="rotate(-12 171.4 235.6)" />
<ellipse cx="170.8" cy="235.4" rx="6.4" ry="8.2" fill="#bcbcbf" transform="rotate(-12 170.8 235.4)" />
<ellipse cx="171.4" cy="235.6" rx="4.6" ry="6.4" fill="#5a5a5d" transform="rotate(-12 171.4 235.6)" />
</g>
<text x="248.8" y="291.4" font-size="2.8" fill="#222" font-weight="bold" >14</text>
<text x="92.2" y="307.8" font-size="5.6" fill="#c0452a" textLength="6.0" lengthAdjust="spacingAndGlyphs" >15</text>
<rect x="103.4" y="300.5" width="151.7" height="113.0" fill="#fff" stroke="#c24a2c" stroke-width="1.4" />
<g transform="translate(105.3 302.3) scale(0.3415) translate(-357.5 -70)"><defs><pattern id="hxb" width="2.8" height="2.8" patternUnits="userSpaceOnUse" patternTransform="rotate(45)"><path d="M0.4 0V2.8" stroke="#3a3a3a" stroke-width="0.7425000000000002"/><path d="M0 0.4H2.8" stroke="#555" stroke-width="0.6075"/></pattern><pattern id="hdb" width="4" height="4" patternUnits="userSpaceOnUse" patternTransform="rotate(45)"><path d="M0.4 0V4" stroke="#3a3a3a" stroke-width="0.8775000000000001"/><path d="M0 0.4H4" stroke="#5a5a5a" stroke-width="0.675"/></pattern><pattern id="hsb" width="2.5" height="2.5" patternUnits="userSpaceOnUse" patternTransform="rotate(45)"><path d="M0.4 0V2.5" stroke="#3a3a3a" stroke-width="0.81"/></pattern></defs>
<rect x="357.5" y="70.0" width="434.2" height="327.0" fill="#ffffff" />
<rect x="357.5" y="69.6" width="434.2" height="3.4" fill="#bfe3ef" />
<rect x="357.5" y="380.0" width="434.2" height="17.4" fill="#fdcc9c" />
<rect x="358.4" y="73.4" width="433.0" height="306.2" fill="#fff" />
<path d="M791.2 73.4H358.4V379.6" fill="none" stroke="#8f8f8f" stroke-width="1.08" />
<path d="M358.4 379.6H791.2V73.4" fill="none" stroke="#dcdcdc" stroke-width="0.81" />
<rect x="378.3" y="77.9" width="408.1" height="296.9" fill="none" stroke="#343434" stroke-width="1.35" />
<rect x="365.1" y="77.9" width="13.2" height="122.6" fill="none" stroke="#343434" stroke-width="1.35" />
<line x1="371.5" y1="77.9" x2="371.5" y2="200.5" stroke="#343434" stroke-width="0.9425000000000001" />
<line x1="365.1" y1="138.8" x2="378.3" y2="138.8" stroke="#343434" stroke-width="1.35" />
<text x="370.2" y="122.0" font-size="5.46" fill="#333" font-style="italic" textLength="24.0" lengthAdjust="spacingAndGlyphs" transform="rotate(-90 370.2 122.0)" >Перв. примен.</text>
<text x="370.2" y="180.0" font-size="5.46" fill="#333" font-style="italic" textLength="17.0" lengthAdjust="spacingAndGlyphs" transform="rotate(-90 370.2 180.0)" >Справ. №</text>
<rect x="365.1" y="224.5" width="13.2" height="150.3" fill="none" stroke="#343434" stroke-width="1.35" />
<line x1="371.5" y1="224.5" x2="371.5" y2="374.8" stroke="#343434" stroke-width="0.9425000000000001" />
<line x1="365.1" y1="260.8" x2="378.3" y2="260.8" stroke="#343434" stroke-width="1.35" />
<line x1="365.1" y1="286.7" x2="378.3" y2="286.7" stroke="#343434" stroke-width="1.35" />
<line x1="365.1" y1="312.7" x2="378.3" y2="312.7" stroke="#343434" stroke-width="1.35" />
<line x1="365.1" y1="349.0" x2="378.3" y2="349.0" stroke="#343434" stroke-width="1.35" />
<text x="370.2" y="255.0" font-size="5.46" fill="#333" font-style="italic" textLength="22.0" lengthAdjust="spacingAndGlyphs" transform="rotate(-90 370.2 255.0)" >Подп. и дата</text>
<text x="370.2" y="284.5" font-size="5.46" fill="#333" font-style="italic" textLength="21.0" lengthAdjust="spacingAndGlyphs" transform="rotate(-90 370.2 284.5)" >Инв. № дубл.</text>
<text x="370.2" y="310.5" font-size="5.46" fill="#333" font-style="italic" textLength="21.0" lengthAdjust="spacingAndGlyphs" transform="rotate(-90 370.2 310.5)" >Взам. инв. №</text>
<text x="370.2" y="343.0" font-size="5.46" fill="#333" font-style="italic" textLength="22.0" lengthAdjust="spacingAndGlyphs" transform="rotate(-90 370.2 343.0)" >Подп. и дата</text>
<text x="370.2" y="372.5" font-size="5.46" fill="#333" font-style="italic" textLength="21.0" lengthAdjust="spacingAndGlyphs" transform="rotate(-90 370.2 372.5)" >Инв. № подл.</text>
<rect x="378.3" y="77.9" width="73.1" height="14.6" fill="none" stroke="#343434" stroke-width="1.35" />
<text x="0" y="0" font-size="10.6" font-style="italic" fill="#333" textLength="65.5" lengthAdjust="spacingAndGlyphs" transform="translate(445.7 81.6) rotate(180)">17ІМП.258.000001</text>
<path d="M451.2 142.6L451.2 126.8L451.8 126.0L454.0 126.0L456.3 133.6L458.3 133.6L460.6 126.0L464.1 126.0L466.4 133.6L468.4 133.6L470.7 126.0L474.2 126.0L476.5 133.6L478.5 133.6L480.8 126.0L484.3 126.0L486.6 133.6L488.6 133.6L490.9 126.0L493.0 126.0L493.6 126.8L493.6 142.6Z" fill="url(#hxb)" stroke="#343434" stroke-width="1.35" />
<path d="M451.2 277.4L451.2 292.2L451.8 293.0L454.0 293.0L456.3 285.4L458.3 285.4L460.6 293.0L464.1 293.0L466.4 285.4L468.4 285.4L470.7 293.0L474.2 293.0L476.5 285.4L478.5 285.4L480.8 293.0L484.3 293.0L486.6 285.4L488.6 285.4L490.9 293.0L493.0 293.0L493.6 292.2L493.6 277.4Z" fill="url(#hsb)" stroke="#343434" stroke-width="1.35" />
<rect x="467.0" y="142.6" width="11.8" height="12.2" fill="url(#hxb)" />
<rect x="467.0" y="174.2" width="11.8" height="15.6" fill="url(#hxb)" />
<rect x="451.2" y="189.8" width="51.1" height="5.2" fill="url(#hxb)" stroke="#343434" stroke-width="1.35" />
<rect x="451.2" y="221.7" width="51.1" height="7.6" fill="url(#hxb)" stroke="#343434" stroke-width="1.35" />
<rect x="467.0" y="229.3" width="11.8" height="14.5" fill="url(#hxb)" />
<rect x="467.0" y="263.2" width="11.8" height="14.2" fill="url(#hsb)" />
<line x1="451.2" y1="142.6" x2="451.2" y2="189.8" stroke="#343434" stroke-width="1.35" />
<line x1="451.2" y1="229.3" x2="451.2" y2="277.4" stroke="#343434" stroke-width="1.35" />
<line x1="493.6" y1="142.6" x2="493.6" y2="189.8" stroke="#343434" stroke-width="1.35" />
<line x1="493.6" y1="229.3" x2="493.6" y2="277.4" stroke="#343434" stroke-width="1.35" />
<line x1="451.2" y1="195.0" x2="451.2" y2="221.7" stroke="#343434" stroke-width="1.35" />
<line x1="502.3" y1="195.0" x2="502.3" y2="221.7" stroke="#343434" stroke-width="1.35" />
<line x1="467.0" y1="142.6" x2="467.0" y2="189.8" stroke="#343434" stroke-width="1.35" />
<line x1="467.0" y1="229.3" x2="467.0" y2="277.4" stroke="#343434" stroke-width="1.35" />
<line x1="478.8" y1="142.6" x2="478.8" y2="189.8" stroke="#343434" stroke-width="1.35" />
<line x1="478.8" y1="229.3" x2="478.8" y2="277.4" stroke="#343434" stroke-width="1.35" />
<line x1="451.2" y1="142.6" x2="467.0" y2="142.6" stroke="#343434" stroke-width="1.35" />
<line x1="478.8" y1="142.6" x2="493.6" y2="142.6" stroke="#343434" stroke-width="1.35" />
<line x1="451.2" y1="277.4" x2="467.0" y2="277.4" stroke="#343434" stroke-width="1.35" />
<line x1="478.8" y1="277.4" x2="493.6" y2="277.4" stroke="#343434" stroke-width="1.35" />
<line x1="467.0" y1="154.8" x2="478.8" y2="154.8" stroke="#343434" stroke-width="0.8925000000000002" />
<line x1="467.0" y1="174.2" x2="478.8" y2="174.2" stroke="#343434" stroke-width="0.8925000000000002" />
<line x1="467.0" y1="243.8" x2="478.8" y2="243.8" stroke="#343434" stroke-width="0.8925000000000002" />
<line x1="467.0" y1="263.2" x2="478.8" y2="263.2" stroke="#343434" stroke-width="0.8925000000000002" />
<line x1="451.2" y1="196.6" x2="502.3" y2="196.6" stroke="#343434" stroke-width="0.7425000000000002" />
<line x1="451.2" y1="220.2" x2="502.3" y2="220.2" stroke="#343434" stroke-width="0.7425000000000002" />
<line x1="446.0" y1="209.0" x2="507.0" y2="209.0" stroke="#343434" stroke-width="0.7425000000000002" stroke-dasharray="6 1.2 1 1.2"/>
<line x1="481.6" y1="146.0" x2="481.6" y2="182.0" stroke="#343434" stroke-width="0.7425000000000002" stroke-dasharray="4 1 1 1"/>
<line x1="481.6" y1="236.0" x2="481.6" y2="272.0" stroke="#343434" stroke-width="0.7425000000000002" stroke-dasharray="4 1 1 1"/>
<line x1="472.9" y1="191.0" x2="472.9" y2="228.0" stroke="#343434" stroke-width="0.7425000000000002" stroke-dasharray="4 1 1 1"/>
<line x1="463.0" y1="164.5" x2="484.0" y2="164.5" stroke="#343434" stroke-width="0.7425000000000002" stroke-dasharray="4 1 1 1"/>
<line x1="463.0" y1="253.5" x2="484.0" y2="253.5" stroke="#343434" stroke-width="0.7425000000000002" stroke-dasharray="4 1 1 1"/>
<circle cx="472.2" cy="131.2" r="22.6" fill="none" stroke="#343434" stroke-width="0.7425000000000002" />
<line x1="390.1" y1="127.6" x2="451.2" y2="127.6" stroke="#343434" stroke-width="0.7425000000000002" />
<line x1="390.1" y1="291.0" x2="451.2" y2="291.0" stroke="#343434" stroke-width="0.7425000000000002" />
<line x1="391.6" y1="127.6" x2="391.6" y2="291.0" stroke="#343434" stroke-width="0.7425000000000002" />
<path d="M391.6 127.6L392.3 130.8L390.9 130.8Z" fill="#343434"/>
<path d="M391.6 291.0L390.9 287.8L392.3 287.8Z" fill="#343434"/>
<line x1="402.3" y1="141.2" x2="451.2" y2="141.2" stroke="#343434" stroke-width="0.7425000000000002" />
<line x1="402.3" y1="277.2" x2="451.2" y2="277.2" stroke="#343434" stroke-width="0.7425000000000002" />
<line x1="403.8" y1="141.2" x2="403.8" y2="277.2" stroke="#343434" stroke-width="0.7425000000000002" />
<path d="M403.8 141.2L404.5 144.4L403.1 144.4Z" fill="#343434"/>
<path d="M403.8 277.2L403.1 274.0L404.5 274.0Z" fill="#343434"/>
<line x1="413.4" y1="166.5" x2="451.2" y2="166.5" stroke="#343434" stroke-width="0.7425000000000002" />
<line x1="413.4" y1="252.4" x2="451.2" y2="252.4" stroke="#343434" stroke-width="0.7425000000000002" />
<line x1="414.9" y1="166.5" x2="414.9" y2="252.4" stroke="#343434" stroke-width="0.7425000000000002" />
<path d="M414.9 166.5L415.6 169.7L414.2 169.7Z" fill="#343434"/>
<path d="M414.9 252.4L414.2 249.2L415.6 249.2Z" fill="#343434"/>
<line x1="424.5" y1="189.8" x2="451.2" y2="189.8" stroke="#343434" stroke-width="0.7425000000000002" />
<line x1="424.5" y1="228.6" x2="451.2" y2="228.6" stroke="#343434" stroke-width="0.7425000000000002" />
<line x1="426.0" y1="189.8" x2="426.0" y2="228.6" stroke="#343434" stroke-width="0.7425000000000002" />
<path d="M426.0 189.8L426.7 193.0L425.3 193.0Z" fill="#343434"/>
<path d="M426.0 228.6L425.3 225.4L426.7 225.4Z" fill="#343434"/>
<text x="390.3" y="217.0" font-size="4.94" fill="#333" font-style="italic" textLength="28.0" lengthAdjust="spacingAndGlyphs" transform="rotate(-90 390.3 217.0)" >Ø 315 h9 (-0,13)</text>
<text x="402.5" y="196.0" font-size="4.94" fill="#333" font-style="italic" textLength="11.0" lengthAdjust="spacingAndGlyphs" transform="rotate(-90 402.5 196.0)" >Ø 265</text>
<text x="413.6" y="223.0" font-size="4.94" fill="#333" font-style="italic" textLength="11.0" lengthAdjust="spacingAndGlyphs" transform="rotate(-90 413.6 223.0)" >Ø 170</text>
<text x="424.7" y="213.0" font-size="4.94" fill="#333" font-style="italic" textLength="9.0" lengthAdjust="spacingAndGlyphs" transform="rotate(-90 424.7 213.0)" >Ø 75</text>
<text x="432.5" y="177.3" font-size="4.68" fill="#333" font-style="italic" textLength="9.0" lengthAdjust="spacingAndGlyphs" >2х45°</text>
<text x="431.0" y="182.6" font-size="4.42" fill="#333" font-style="italic" textLength="11.0" lengthAdjust="spacingAndGlyphs" >4 фаски</text>
<line x1="430.0" y1="178.5" x2="449.0" y2="178.5" stroke="#343434" stroke-width="0.7425000000000002" />
<path d="M451.2 178.5L448.6 179.1L448.6 177.9Z" fill="#343434"/>
<line x1="454.5" y1="178.5" x2="458.0" y2="178.5" stroke="#343434" stroke-width="0.7425000000000002" />
<path d="M451.2 178.5L448.6 177.9L448.6 179.1Z" fill="#343434"/>
<text x="431.0" y="200.6" font-size="4.68" fill="#333" font-style="italic" textLength="14.0" lengthAdjust="spacingAndGlyphs" >2,50х45°</text>
<text x="432.5" y="206.0" font-size="4.42" fill="#333" font-style="italic" textLength="11.0" lengthAdjust="spacingAndGlyphs" >2 фаски</text>
<line x1="430.0" y1="201.8" x2="449.0" y2="201.8" stroke="#343434" stroke-width="0.7425000000000002" />
<path d="M451.2 201.8L448.6 202.4L448.6 201.2Z" fill="#343434"/>
<line x1="454.5" y1="201.8" x2="458.0" y2="201.8" stroke="#343434" stroke-width="0.7425000000000002" />
<line x1="451.2" y1="147.2" x2="467.0" y2="147.2" stroke="#343434" stroke-width="0.7425000000000002" />
<path d="M451.2 147.2L453.6 146.6L453.6 147.8Z" fill="#343434"/>
<path d="M467.0 147.2L464.6 147.8L464.6 146.6Z" fill="#343434"/>
<line x1="478.8" y1="147.2" x2="499.0" y2="147.2" stroke="#343434" stroke-width="0.7425000000000002" />
<path d="M478.8 147.2L481.2 146.6L481.2 147.8Z" fill="#343434"/>
<path d="M493.6 147.2L491.2 147.8L491.2 146.6Z" fill="#343434"/>
<text x="459.2" y="146.2" font-size="4.68" fill="#333" text-anchor="middle" font-style="italic" textLength="4.0" lengthAdjust="spacingAndGlyphs" >30</text>
<text x="486.2" y="146.2" font-size="4.68" fill="#333" text-anchor="middle" font-style="italic" textLength="4.0" lengthAdjust="spacingAndGlyphs" >30</text>
<line x1="481.7" y1="154.8" x2="481.7" y2="174.2" stroke="#343434" stroke-width="0.7425000000000002" />
<path d="M481.7 154.8L482.2 157.2L481.1 157.2Z" fill="#343434"/>
<path d="M481.7 174.2L481.1 171.8L482.2 171.8Z" fill="#343434"/>
<line x1="478.8" y1="154.8" x2="484.0" y2="154.8" stroke="#343434" stroke-width="0.7425000000000002" />
<line x1="478.8" y1="174.2" x2="484.0" y2="174.2" stroke="#343434" stroke-width="0.7425000000000002" />
<text x="486.4" y="171.5" font-size="4.68" fill="#333" font-style="italic" textLength="9.0" lengthAdjust="spacingAndGlyphs" transform="rotate(-90 486.4 171.5)" >Ø 38</text>
<text x="490.2" y="172.5" font-size="4.42" fill="#333" font-style="italic" textLength="10.0" lengthAdjust="spacingAndGlyphs" transform="rotate(-90 490.2 172.5)" >4 отв.</text>
<line x1="480.4" y1="187.9" x2="517.9" y2="167.2" stroke="#343434" stroke-width="0.7425000000000002" />
<path d="M480.4 187.9L482.7 185.9L483.3 187.0Z" fill="#343434"/>
<text x="503.0" y="172.5" font-size="4.68" fill="#333" font-style="italic" textLength="4.5" lengthAdjust="spacingAndGlyphs" transform="rotate(-29 503.0 172.5)" >45</text>
<text x="500.5" y="180.3" font-size="4.42" fill="#333" font-style="italic" textLength="13.0" lengthAdjust="spacingAndGlyphs" transform="rotate(-29 500.5 180.3)" >4 отвори</text>
<rect x="468.0" y="92.8" width="24.0" height="6.8" fill="#fff" stroke="#343434" stroke-width="0.9425000000000001" /><line x1="476.0" y1="92.8" x2="476.0" y2="99.6" stroke="#343434" stroke-width="0.8425000000000001" /><line x1="485.0" y1="92.8" x2="485.0" y2="99.6" stroke="#343434" stroke-width="0.8425000000000001" /><line x1="470.2" y1="98.2" x2="473.8" y2="94.2" stroke="#343434" stroke-width="0.8425000000000001" /><text x="480.5" y="97.5" font-size="4.68" fill="#333" text-anchor="middle" font-style="italic" textLength="5.7" lengthAdjust="spacingAndGlyphs" >0,1</text><text x="488.5" y="97.5" font-size="4.68" fill="#333" text-anchor="middle" font-style="italic" textLength="1.9" lengthAdjust="spacingAndGlyphs" >А</text>
<rect x="507.6" y="104.5" width="27.0" height="7.0" fill="#fff" stroke="#343434" stroke-width="0.9425000000000001" /><line x1="515.6" y1="104.5" x2="515.6" y2="111.5" stroke="#343434" stroke-width="0.8425000000000001" /><line x1="527.6" y1="104.5" x2="527.6" y2="111.5" stroke="#343434" stroke-width="0.8425000000000001" /><line x1="509.8" y1="110.1" x2="513.4" y2="105.9" stroke="#343434" stroke-width="0.8425000000000001" /><text x="521.6" y="109.4" font-size="4.68" fill="#333" text-anchor="middle" font-style="italic" textLength="7.6" lengthAdjust="spacingAndGlyphs" >0,08</text><text x="531.1" y="109.4" font-size="4.68" fill="#333" text-anchor="middle" font-style="italic" textLength="1.9" lengthAdjust="spacingAndGlyphs" >А</text>
<rect x="506.8" y="145.4" width="26.2" height="7.3" fill="#fff" stroke="#343434" stroke-width="0.9425000000000001" /><line x1="514.8" y1="145.4" x2="514.8" y2="152.7" stroke="#343434" stroke-width="0.8425000000000001" /><line x1="526.3" y1="145.4" x2="526.3" y2="152.7" stroke="#343434" stroke-width="0.8425000000000001" /><line x1="509.0" y1="151.3" x2="512.6" y2="146.8" stroke="#343434" stroke-width="0.8425000000000001" /><text x="520.5" y="150.6" font-size="4.68" fill="#333" text-anchor="middle" font-style="italic" textLength="7.6" lengthAdjust="spacingAndGlyphs" >0,12</text><text x="529.6" y="150.6" font-size="4.68" fill="#333" text-anchor="middle" font-style="italic" textLength="1.9" lengthAdjust="spacingAndGlyphs" >А</text>
<line x1="468.0" y1="99.6" x2="454.3" y2="125.2" stroke="#343434" stroke-width="0.7425000000000002" />
<path d="M453.9 125.9L454.7 122.9L455.9 123.6Z" fill="#343434"/>
<text x="500.2" y="105.8" font-size="11" fill="#333" font-style="italic" textLength="6.6" lengthAdjust="spacingAndGlyphs" >В</text>
<line x1="492.2" y1="119.5" x2="503.5" y2="108.0" stroke="#343434" stroke-width="0.7425000000000002" />
<line x1="503.5" y1="108.0" x2="507.6" y2="108.0" stroke="#343434" stroke-width="0.7425000000000002" />
<line x1="493.6" y1="126.0" x2="536.5" y2="126.0" stroke="#343434" stroke-width="0.7425000000000002" />
<line x1="493.6" y1="291.0" x2="536.5" y2="291.0" stroke="#343434" stroke-width="0.7425000000000002" />
<line x1="534.2" y1="111.5" x2="534.2" y2="291.0" stroke="#343434" stroke-width="0.7425000000000002" />
<path d="M534.2 126.0L534.9 129.2L533.5 129.2Z" fill="#343434"/>
<path d="M534.2 291.0L533.5 287.8L534.9 287.8Z" fill="#343434"/>
<rect x="533.2" y="124.6" width="2.0" height="2.8" fill="#343434" />
<text x="532.6" y="216.0" font-size="4.94" fill="#333" font-style="italic" textLength="23.0" lengthAdjust="spacingAndGlyphs" transform="rotate(-90 532.6 216.0)" >Ø 324 h11</text>
<line x1="519.7" y1="152.7" x2="519.7" y2="191.5" stroke="#343434" stroke-width="0.7425000000000002" />
<line x1="519.7" y1="191.5" x2="503.0" y2="191.5" stroke="#343434" stroke-width="0.7425000000000002" />
<path d="M502.4 191.5L505.4 190.8L505.4 192.2Z" fill="#343434"/>
<path d="M464.1 217.4L466.7 221.4L470.7 213.1H486.2" fill="none" stroke="#343434" stroke-width="0.9425000000000001" />
<text x="470.6" y="220.4" font-size="7.8" fill="#333" font-style="italic" textLength="15.0" lengthAdjust="spacingAndGlyphs" >Ra 2,5</text>
<line x1="502.3" y1="222.8" x2="513.0" y2="222.8" stroke="#343434" stroke-width="0.7425000000000002" />
<line x1="511.3" y1="222.8" x2="511.3" y2="230.3" stroke="#343434" stroke-width="0.7425000000000002" />
<path d="M509.7 222.8H512.9L511.3 225.4Z" fill="#343434"/>
<rect x="507.5" y="230.3" width="7.7" height="7.3" fill="#fff" stroke="#343434" stroke-width="0.9425000000000001" />
<text x="511.3" y="236.2" font-size="5.46" fill="#333" text-anchor="middle" font-style="italic" >А</text>
<path d="M502.5 245.4L507.5 251.6H530.1" fill="none" stroke="#343434" stroke-width="0.8425000000000001" />
<path d="M502.5 245.4L504.6 247.0L503.7 247.8Z" fill="#343434"/>
<path d="M507.5 248.9L510 251.6L515.2 242.8H530.8" fill="none" stroke="#343434" stroke-width="0.9425000000000001" />
<text x="515.4" y="249.9" font-size="7" fill="#333" font-style="italic" textLength="15.2" lengthAdjust="spacingAndGlyphs" >Ra 3,2</text>
<line x1="451.2" y1="292.0" x2="451.2" y2="315.0" stroke="#343434" stroke-width="0.7425000000000002" />
<line x1="493.6" y1="292.0" x2="493.6" y2="305.0" stroke="#343434" stroke-width="0.7425000000000002" />
<line x1="502.3" y1="229.3" x2="502.3" y2="315.0" stroke="#343434" stroke-width="0.7425000000000002" />
<line x1="451.2" y1="302.6" x2="493.6" y2="302.6" stroke="#343434" stroke-width="0.7425000000000002" />
<path d="M451.2 302.6L454.4 301.9L454.4 303.3Z" fill="#343434"/>
<path d="M493.6 302.6L490.4 303.3L490.4 301.9Z" fill="#343434"/>
<line x1="451.2" y1="312.8" x2="502.3" y2="312.8" stroke="#343434" stroke-width="0.7425000000000002" />
<path d="M451.2 312.8L454.4 312.1L454.4 313.5Z" fill="#343434"/>
<path d="M502.3 312.8L499.1 313.5L499.1 312.1Z" fill="#343434"/>
<text x="472.4" y="301.6" font-size="4.68" fill="#333" text-anchor="middle" font-style="italic" textLength="4.5" lengthAdjust="spacingAndGlyphs" >87</text>
<text x="476.7" y="311.8" font-size="4.68" fill="#333" text-anchor="middle" font-style="italic" textLength="6.0" lengthAdjust="spacingAndGlyphs" >100</text>
<circle cx="595.0" cy="208.6" r="16.0" fill="none" stroke="#343434" stroke-width="0.8425000000000001" />
<circle cx="595.0" cy="208.6" r="14.3" fill="#fff" stroke="#343434" stroke-width="1.35" />
<rect x="590.6" y="191.8" width="8.0" height="4.0" fill="#fff" />
<path d="M590.6 195.1V191.8H598.6V195.1" fill="none" stroke="#343434" stroke-width="1.35" />
<line x1="576.0" y1="208.6" x2="614.0" y2="208.6" stroke="#343434" stroke-width="0.7425000000000002" stroke-dasharray="5 1 1 1"/>
<line x1="595.0" y1="189.0" x2="595.0" y2="228.0" stroke="#343434" stroke-width="0.7425000000000002" stroke-dasharray="5 1 1 1"/>
<line x1="590.6" y1="191.8" x2="590.6" y2="172.4" stroke="#343434" stroke-width="0.7425000000000002" />
<line x1="598.6" y1="191.8" x2="598.6" y2="172.4" stroke="#343434" stroke-width="0.7425000000000002" />
<line x1="580.8" y1="174.5" x2="604.5" y2="174.5" stroke="#343434" stroke-width="0.7425000000000002" />
<path d="M590.6 174.5L588.0 175.1L588.0 173.9Z" fill="#343434"/>
<path d="M598.6 174.5L601.2 173.9L601.2 175.1Z" fill="#343434"/>
<text x="566.3" y="173.2" font-size="4.68" fill="#333" font-style="italic" textLength="18.5" lengthAdjust="spacingAndGlyphs" >14 JS9 (±0,021)</text>
<rect x="555.7" y="174.5" width="27.0" height="7.0" fill="#fff" stroke="#343434" stroke-width="0.9425000000000001" /><line x1="562.2" y1="174.5" x2="562.2" y2="181.5" stroke="#343434" stroke-width="0.8425000000000001" /><line x1="576.2" y1="174.5" x2="576.2" y2="181.5" stroke="#343434" stroke-width="0.8425000000000001" /><line x1="556.6" y1="180.1" x2="558.8" y2="175.9" stroke="#343434" stroke-width="0.8425000000000001" /><line x1="559.2" y1="180.1" x2="561.4" y2="175.9" stroke="#343434" stroke-width="0.8425000000000001" /><text x="569.2" y="179.4" font-size="4.68" fill="#333" text-anchor="middle" font-style="italic" textLength="9.5" lengthAdjust="spacingAndGlyphs" >0,023</text><text x="579.5" y="179.4" font-size="4.68" fill="#333" text-anchor="middle" font-style="italic" textLength="1.9" lengthAdjust="spacingAndGlyphs" >А</text>
<rect x="555.7" y="181.5" width="27.0" height="7.0" fill="#fff" stroke="#343434" stroke-width="0.9425000000000001" /><line x1="562.2" y1="181.5" x2="562.2" y2="188.5" stroke="#343434" stroke-width="0.8425000000000001" /><line x1="576.2" y1="181.5" x2="576.2" y2="188.5" stroke="#343434" stroke-width="0.8425000000000001" /><line x1="557.0" y1="185.0" x2="561.0" y2="185.0" stroke="#343434" stroke-width="0.8425000000000001" /><line x1="557.8" y1="183.8" x2="560.2" y2="183.8" stroke="#343434" stroke-width="0.7425000000000002" /><line x1="557.8" y1="186.2" x2="560.2" y2="186.2" stroke="#343434" stroke-width="0.7425000000000002" /><text x="569.2" y="186.4" font-size="4.68" fill="#333" text-anchor="middle" font-style="italic" textLength="9.5" lengthAdjust="spacingAndGlyphs" >T0,14</text><text x="579.5" y="186.4" font-size="4.68" fill="#333" text-anchor="middle" font-style="italic" textLength="1.9" lengthAdjust="spacingAndGlyphs" >А</text>
<line x1="582.7" y1="178.0" x2="590.6" y2="178.0" stroke="#343434" stroke-width="0.7425000000000002" />
<text x="553.6" y="203.3" font-size="4.68" fill="#333" font-style="italic" textLength="24.0" lengthAdjust="spacingAndGlyphs" >Ø 50 H7 (+0,025)</text>
<line x1="553.0" y1="204.7" x2="579.3" y2="204.7" stroke="#343434" stroke-width="0.7425000000000002" />
<line x1="579.3" y1="204.7" x2="609.2" y2="212.5" stroke="#343434" stroke-width="0.7425000000000002" />
<path d="M581.2 205.2L584.3 205.4L584.0 206.5Z" fill="#343434"/>
<path d="M608.8 212.4L605.7 212.2L606.0 211.1Z" fill="#343434"/>
<line x1="598.0" y1="193.0" x2="624.0" y2="193.0" stroke="#343434" stroke-width="0.7425000000000002" />
<line x1="598.0" y1="223.4" x2="624.0" y2="223.4" stroke="#343434" stroke-width="0.7425000000000002" />
<line x1="622.1" y1="193.0" x2="622.1" y2="223.4" stroke="#343434" stroke-width="0.7425000000000002" />
<path d="M622.1 193.0L622.7 195.8L621.5 195.8Z" fill="#343434"/>
<path d="M622.1 223.4L621.5 220.6L622.7 220.6Z" fill="#343434"/>
<text x="620.6" y="216.0" font-size="4.68" fill="#333" font-style="italic" textLength="15.0" lengthAdjust="spacingAndGlyphs" transform="rotate(-90 620.6 216.0)" >53,8 (+0,2)</text>
<path d="M665.2 178.5L665.2 153.6Q665.2 151.6 666.6 151.6L668.9 151.6Q669.7 151.6 670.0 152.5L674.6 167.5L679.8 167.5L684.4 152.5Q684.7 151.6 685.5 151.6L688.8 151.6Q689.6 151.6 689.9 152.5L694.5 167.5L699.7 167.5L704.3 152.5Q704.6 151.6 705.4 151.6L708.6 151.6Q709.4 151.6 709.7 152.5L714.3 167.5L719.5 167.5L724.1 152.5Q724.4 151.6 725.2 151.6L728.5 151.6Q729.3 151.6 729.6 152.5L734.2 167.5L739.4 167.5L744.0 152.5Q744.3 151.6 745.1 151.6L747.4 151.6Q748.8 151.6 748.8 153.6L748.8 178.5Q748.8 181.5 745.8 181.5L723.4 181.5Q719.9 181.5 719.9 185.0L719.9 211.0L696.0 211.0L696.0 185.0Q696.0 181.5 692.5 181.5L668.2 181.5Q665.2 181.5 665.2 178.5Z" fill="url(#hdb)" stroke="#343434" stroke-width="1.4500000000000002" />
<path d="M665.2 180A43.3 43.3 0 0 0 748.8 180" fill="none" stroke="#343434" stroke-width="0.8425000000000001" />
<line x1="661.0" y1="154.9" x2="778.0" y2="154.9" stroke="#343434" stroke-width="0.7425000000000002" stroke-dasharray="7 1.2 1 1.2"/>
<line x1="748.8" y1="151.6" x2="778.0" y2="151.6" stroke="#343434" stroke-width="0.7425000000000002" />
<line x1="738.0" y1="158.2" x2="778.0" y2="158.2" stroke="#343434" stroke-width="0.7425000000000002" />
<line x1="740.0" y1="167.5" x2="778.0" y2="167.5" stroke="#343434" stroke-width="0.7425000000000002" />
<line x1="776.5" y1="138.0" x2="776.5" y2="192.0" stroke="#343434" stroke-width="0.7425000000000002" />
<path d="M776.5 151.6L776.0 149.0L777.0 149.0Z" fill="#343434"/>
<path d="M776.5 158.2L777.0 160.8L776.0 160.8Z" fill="#343434"/>
<path d="M776.5 167.5L776.0 164.9L777.0 164.9Z" fill="#343434"/>
<text x="775.2" y="148.5" font-size="4.68" fill="#333" font-style="italic" textLength="9.0" lengthAdjust="spacingAndGlyphs" transform="rotate(-90 775.2 148.5)" >4,50</text>
<text x="775.2" y="188.0" font-size="4.68" fill="#333" font-style="italic" textLength="15.0" lengthAdjust="spacingAndGlyphs" transform="rotate(-90 775.2 188.0)" >10,8 min</text>
<line x1="677.2" y1="146.0" x2="677.2" y2="172.0" stroke="#343434" stroke-width="0.7425000000000002" stroke-dasharray="4 1 1 1"/>
<line x1="697.1" y1="146.0" x2="697.1" y2="172.0" stroke="#343434" stroke-width="0.7425000000000002" stroke-dasharray="4 1 1 1"/>
<line x1="716.9" y1="146.0" x2="716.9" y2="172.0" stroke="#343434" stroke-width="0.7425000000000002" stroke-dasharray="4 1 1 1"/>
<line x1="736.8" y1="146.0" x2="736.8" y2="172.0" stroke="#343434" stroke-width="0.7425000000000002" stroke-dasharray="4 1 1 1"/>
<line x1="736.8" y1="170.0" x2="724.2" y2="141.6" stroke="#343434" stroke-width="0.7425000000000002" />
<line x1="736.8" y1="170.0" x2="749.4" y2="141.6" stroke="#343434" stroke-width="0.7425000000000002" />
<path d="M724.2 141.6Q736.8 137.4 749.4 141.6" fill="none" stroke="#343434" stroke-width="0.7425000000000002" />
<text x="737.0" y="137.6" font-size="4.68" fill="#333" text-anchor="middle" font-style="italic" textLength="12.0" lengthAdjust="spacingAndGlyphs" >36° ±1°</text>
<text x="694.6" y="129.6" font-size="9.2" fill="#333" font-style="italic" textLength="27.0" lengthAdjust="spacingAndGlyphs" >В (М1:1)</text>
<path d="M650.8 139.6L653.8 143.7L658.4 135.6H675" fill="none" stroke="#343434" stroke-width="0.9425000000000001" />
<text x="659.2" y="142.6" font-size="7.4" fill="#333" font-style="italic" textLength="14.4" lengthAdjust="spacingAndGlyphs" >Ra 2,5</text>
<line x1="654.3" y1="143.7" x2="675.5" y2="143.7" stroke="#343434" stroke-width="0.7425000000000002" />
<line x1="675.5" y1="143.7" x2="684.9" y2="152.2" stroke="#343434" stroke-width="0.7425000000000002" />
<path d="M685.2 152.5L682.7 151.1L683.5 150.2Z" fill="#343434"/>
<text x="690.8" y="149.5" font-size="4.42" fill="#333" font-style="italic" textLength="4.0" lengthAdjust="spacingAndGlyphs" transform="rotate(-56 690.8 149.5)" >R1</text>
<text x="693.8" y="151.0" font-size="4.42" fill="#333" font-style="italic" textLength="15.0" lengthAdjust="spacingAndGlyphs" transform="rotate(-56 693.8 151.0)" >10 радіусів</text>
<line x1="665.2" y1="183.0" x2="665.2" y2="228.5" stroke="#343434" stroke-width="0.7425000000000002" />
<line x1="677.2" y1="183.0" x2="677.2" y2="228.5" stroke="#343434" stroke-width="0.7425000000000002" />
<line x1="736.8" y1="183.0" x2="736.8" y2="228.5" stroke="#343434" stroke-width="0.7425000000000002" />
<line x1="748.8" y1="183.0" x2="748.8" y2="228.5" stroke="#343434" stroke-width="0.7425000000000002" />
<line x1="659.5" y1="226.3" x2="755.5" y2="226.3" stroke="#343434" stroke-width="0.7425000000000002" />
<path d="M665.2 226.3L662.4 226.9L662.4 225.8Z" fill="#343434"/>
<path d="M677.2 226.3L680.0 225.8L680.0 226.9Z" fill="#343434"/>
<path d="M677.2 226.3L674.4 225.8L674.4 226.9Z" fill="#343434"/>
<path d="M736.8 226.3L734.0 226.9L734.0 225.8Z" fill="#343434"/>
<path d="M748.8 226.3L751.6 225.8L751.6 226.9Z" fill="#343434"/>
<text x="664.5" y="225.0" font-size="4.29" fill="#333" font-style="italic" textLength="11.5" lengthAdjust="spacingAndGlyphs" >12,5 ±0,3</text>
<text x="707.0" y="225.0" font-size="4.68" fill="#333" text-anchor="middle" font-style="italic" textLength="12.0" lengthAdjust="spacingAndGlyphs" >67 ±0,4</text>
<text x="737.3" y="225.0" font-size="4.29" fill="#333" font-style="italic" textLength="11.5" lengthAdjust="spacingAndGlyphs" >12,5 ±0,3</text>
<line x1="716.9" y1="172.0" x2="716.9" y2="219.0" stroke="#343434" stroke-width="0.7425000000000002" />
<line x1="716.9" y1="216.6" x2="736.8" y2="216.6" stroke="#343434" stroke-width="0.7425000000000002" />
<path d="M716.9 216.6L719.5 216.0L719.5 217.2Z" fill="#343434"/>
<path d="M736.8 216.6L734.2 217.2L734.2 216.0Z" fill="#343434"/>
<text x="727.0" y="215.4" font-size="4.68" fill="#333" text-anchor="middle" font-style="italic" textLength="11.5" lengthAdjust="spacingAndGlyphs" >19 ±0,4</text>
<path d="M731.4 91L735 96.5L741.5 84.5H779.6" fill="none" stroke="#343434" stroke-width="0.9925000000000002" />
<text x="741.6" y="94.2" font-size="11.4" fill="#333" font-style="italic" textLength="26.0" lengthAdjust="spacingAndGlyphs" >Ra 6,3</text>
<text x="767.8" y="95.8" font-size="11.4" fill="#555" font-style="italic" textLength="3.0" lengthAdjust="spacingAndGlyphs" >(</text>
<text x="778.0" y="95.8" font-size="11.4" fill="#555" font-style="italic" textLength="3.0" lengthAdjust="spacingAndGlyphs" >)</text>
<path d="M770.6 91.4L772.8 95L777.6 86.8" fill="none" stroke="#444" stroke-width="0.9425000000000001" />
<text x="597.2" y="259.3" font-size="8.4" fill="#333" font-style="italic" textLength="129.4" lengthAdjust="spacingAndGlyphs" >1 Припускається виготовлення з чавуну СЧ 20</text>
<text x="597.2" y="268.6" font-size="8.4" fill="#333" font-style="italic" textLength="42.7" lengthAdjust="spacingAndGlyphs" >2 ISO 2768 – m</text>
<text x="597.2" y="277.8" font-size="8.4" fill="#333" font-style="italic" textLength="167.3" lengthAdjust="spacingAndGlyphs" >3 На робочих поверхнях шква раковини та шпаристості не</text>
<text x="597.2" y="286.0" font-size="8.4" fill="#333" font-style="italic" textLength="42.1" lengthAdjust="spacingAndGlyphs" >припускаються</text>
<text x="597.2" y="295.9" font-size="8.4" fill="#333" font-style="italic" textLength="158.1" lengthAdjust="spacingAndGlyphs" >4 Шків піддати статичному балансуванню, дисбаланс не</text>
<text x="597.2" y="304.1" font-size="8.4" fill="#333" font-style="italic" textLength="35.9" lengthAdjust="spacingAndGlyphs" >більше 3 г*м</text>
<rect x="594.7" y="318.0" width="191.7" height="56.8" fill="none" stroke="#343434" stroke-width="1.35" />
<line x1="602.0" y1="318.0" x2="602.0" y2="343.8" stroke="#343434" stroke-width="1.35" />
<line x1="612.4" y1="318.0" x2="612.4" y2="374.8" stroke="#343434" stroke-width="1.35" />
<line x1="636.3" y1="318.0" x2="636.3" y2="374.8" stroke="#343434" stroke-width="1.35" />
<line x1="651.8" y1="318.0" x2="651.8" y2="374.8" stroke="#343434" stroke-width="1.35" />
<line x1="662.2" y1="318.0" x2="662.2" y2="374.8" stroke="#343434" stroke-width="1.35" />
<line x1="594.7" y1="323.2" x2="662.2" y2="323.2" stroke="#343434" stroke-width="0.8425000000000001" />
<line x1="594.7" y1="328.3" x2="662.2" y2="328.3" stroke="#343434" stroke-width="0.8425000000000001" />
<line x1="594.7" y1="333.5" x2="662.2" y2="333.5" stroke="#343434" stroke-width="0.8425000000000001" />
<line x1="594.7" y1="338.7" x2="662.2" y2="338.7" stroke="#343434" stroke-width="1.35" />
<line x1="594.7" y1="343.8" x2="662.2" y2="343.8" stroke="#343434" stroke-width="1.35" />
<line x1="594.7" y1="349.0" x2="662.2" y2="349.0" stroke="#343434" stroke-width="0.8425000000000001" />
<line x1="594.7" y1="354.1" x2="662.2" y2="354.1" stroke="#343434" stroke-width="0.8425000000000001" />
<line x1="594.7" y1="359.3" x2="662.2" y2="359.3" stroke="#343434" stroke-width="0.8425000000000001" />
<line x1="594.7" y1="364.5" x2="662.2" y2="364.5" stroke="#343434" stroke-width="0.8425000000000001" />
<line x1="594.7" y1="369.6" x2="662.2" y2="369.6" stroke="#343434" stroke-width="0.8425000000000001" />
<line x1="662.2" y1="333.5" x2="786.4" y2="333.5" stroke="#343434" stroke-width="1.35" />
<line x1="662.2" y1="359.3" x2="786.4" y2="359.3" stroke="#343434" stroke-width="1.35" />
<line x1="734.9" y1="333.5" x2="734.9" y2="374.8" stroke="#343434" stroke-width="1.35" />
<line x1="734.9" y1="338.7" x2="786.4" y2="338.7" stroke="#343434" stroke-width="1.35" />
<line x1="734.9" y1="354.1" x2="786.4" y2="354.1" stroke="#343434" stroke-width="1.35" />
<line x1="750.5" y1="333.5" x2="750.5" y2="354.1" stroke="#343434" stroke-width="1.35" />
<line x1="768.1" y1="333.5" x2="768.1" y2="354.1" stroke="#343434" stroke-width="1.35" />
<line x1="740.1" y1="338.7" x2="740.1" y2="354.1" stroke="#343434" stroke-width="0.8425000000000001" />
<line x1="745.3" y1="338.7" x2="745.3" y2="354.1" stroke="#343434" stroke-width="0.8425000000000001" />
<line x1="755.6" y1="354.1" x2="755.6" y2="359.3" stroke="#343434" stroke-width="1.35" />
<text x="693.5" y="328.4" font-size="10.4" fill="#333" font-style="italic" textLength="63.6" lengthAdjust="spacingAndGlyphs" >17ІМП.258.000001</text>
<text x="699.2" y="344.6" font-size="10" fill="#333" text-anchor="middle" font-style="italic" textLength="16.6" lengthAdjust="spacingAndGlyphs" >Шків</text>
<text x="699.2" y="355.6" font-size="10" fill="#333" text-anchor="middle" font-style="italic" textLength="30.8" lengthAdjust="spacingAndGlyphs" >ведений</text>
<text x="666.5" y="368.4" font-size="5.46" fill="#333" font-style="italic" textLength="65.8" lengthAdjust="spacingAndGlyphs" >Сплав АК Мg2,5 ДСТУ ISO 209-1:2002</text>
<text x="737.7" y="369.2" font-size="7" fill="#333" font-style="italic" textLength="46.3" lengthAdjust="spacingAndGlyphs" >ТДАТУ, ІМКП, 2023</text>
<text x="742.7" y="337.6" font-size="4.68" fill="#333" text-anchor="middle" font-style="italic" textLength="7.0" lengthAdjust="spacingAndGlyphs" >Літ.</text>
<text x="759.3" y="337.6" font-size="4.68" fill="#333" text-anchor="middle" font-style="italic" textLength="10.0" lengthAdjust="spacingAndGlyphs" >Маса</text>
<text x="777.2" y="337.6" font-size="4.68" fill="#333" text-anchor="middle" font-style="italic" textLength="15.0" lengthAdjust="spacingAndGlyphs" >Масштаб</text>
<text x="735.8" y="351.2" font-size="7" fill="#333" font-style="italic" textLength="3.6" lengthAdjust="spacingAndGlyphs" >У</text>
<text x="758.4" y="351.4" font-size="7.4" fill="#333" text-anchor="middle" font-style="italic" textLength="9.4" lengthAdjust="spacingAndGlyphs" >7,41</text>
<text x="777.2" y="351.4" font-size="7.4" fill="#333" text-anchor="middle" font-style="italic" textLength="7.8" lengthAdjust="spacingAndGlyphs" >1:2</text>
<text x="745.0" y="358.3" font-size="4.68" fill="#333" text-anchor="middle" font-style="italic" textLength="10.0" lengthAdjust="spacingAndGlyphs" >Аркуш</text>
<text x="770.0" y="358.3" font-size="4.68" fill="#333" text-anchor="middle" font-style="italic" textLength="17.0" lengthAdjust="spacingAndGlyphs" >Аркушів  1</text>
<text x="595.3" y="342.7" font-size="4.16" fill="#333" font-style="italic" textLength="5.0" lengthAdjust="spacingAndGlyphs" >Зм.</text>
<text x="602.6" y="342.7" font-size="4.16" fill="#333" font-style="italic" textLength="7.0" lengthAdjust="spacingAndGlyphs" >Арк.</text>
<text x="616.0" y="342.7" font-size="4.16" fill="#333" font-style="italic" textLength="15.0" lengthAdjust="spacingAndGlyphs" >№ докум.</text>
<text x="639.0" y="342.7" font-size="4.16" fill="#333" font-style="italic" textLength="9.0" lengthAdjust="spacingAndGlyphs" >Підп.</text>
<text x="652.6" y="342.7" font-size="4.16" fill="#333" font-style="italic" textLength="8.5" lengthAdjust="spacingAndGlyphs" >Дата</text>
<text x="595.5" y="347.9" font-size="4.29" fill="#333" font-style="italic" textLength="13.3" lengthAdjust="spacingAndGlyphs" >Розроб.</text>
<text x="613.2" y="347.9" font-size="4.29" fill="#333" font-style="italic" textLength="10.0" lengthAdjust="spacingAndGlyphs" >Зелен</text>
<text x="595.5" y="353.0" font-size="4.29" fill="#333" font-style="italic" textLength="11.4" lengthAdjust="spacingAndGlyphs" >Перев.</text>
<text x="613.2" y="353.0" font-size="4.29" fill="#333" font-style="italic" textLength="22.0" lengthAdjust="spacingAndGlyphs" >Чернявський</text>
<text x="595.5" y="358.2" font-size="4.29" fill="#333" font-style="italic" textLength="14.0" lengthAdjust="spacingAndGlyphs" >Т.контр.</text>
<text x="595.5" y="368.5" font-size="4.29" fill="#333" font-style="italic" textLength="14.0" lengthAdjust="spacingAndGlyphs" >Н.контр.</text>
<text x="613.2" y="368.5" font-size="4.29" fill="#333" font-style="italic" textLength="12.0" lengthAdjust="spacingAndGlyphs" >Дереза</text>
<text x="595.5" y="373.7" font-size="4.29" fill="#333" font-style="italic" textLength="9.5" lengthAdjust="spacingAndGlyphs" >Затв.</text>
<text x="613.2" y="373.7" font-size="4.29" fill="#333" font-style="italic" textLength="14.0" lengthAdjust="spacingAndGlyphs" >Вершков</text>
<text x="666.5" y="378.8" font-size="4.94" fill="#333" font-style="italic" textLength="19.0" lengthAdjust="spacingAndGlyphs" >Копіював</text>
<text x="758.2" y="378.8" font-size="4.94" fill="#333" font-style="italic" textLength="21.0" lengthAdjust="spacingAndGlyphs" >Формат А3</text>
<text x="776.4" y="391.6" font-size="9.4" fill="#1c2a74" font-weight="bold" textLength="10.0" lengthAdjust="spacingAndGlyphs" >15</text></g>
</g>
<defs><pattern id="hxa" width="2.8" height="2.8" patternUnits="userSpaceOnUse" patternTransform="rotate(45)"><path d="M0.4 0V2.8" stroke="#3a3a3a" stroke-width="0.55"/><path d="M0 0.4H2.8" stroke="#555" stroke-width="0.45"/></pattern><pattern id="hda" width="4" height="4" patternUnits="userSpaceOnUse" patternTransform="rotate(45)"><path d="M0.4 0V4" stroke="#3a3a3a" stroke-width="0.65"/><path d="M0 0.4H4" stroke="#5a5a5a" stroke-width="0.5"/></pattern><pattern id="hsa" width="2.5" height="2.5" patternUnits="userSpaceOnUse" patternTransform="rotate(45)"><path d="M0.4 0V2.5" stroke="#3a3a3a" stroke-width="0.6"/></pattern></defs>
<rect x="357.5" y="70.0" width="434.2" height="327.0" fill="#ffffff" />
<rect x="357.5" y="69.6" width="434.2" height="3.4" fill="#bfe3ef" />
<rect x="357.5" y="380.0" width="434.2" height="17.4" fill="#fdcc9c" />
<rect x="358.4" y="73.4" width="433.0" height="306.2" fill="#fff" />
<path d="M791.2 73.4H358.4V379.6" fill="none" stroke="#8f8f8f" stroke-width="0.8" />
<path d="M358.4 379.6H791.2V73.4" fill="none" stroke="#dcdcdc" stroke-width="0.6" />
<rect x="378.3" y="77.9" width="408.1" height="296.9" fill="none" stroke="#343434" stroke-width="1.0" />
<rect x="365.1" y="77.9" width="13.2" height="122.6" fill="none" stroke="#343434" stroke-width="1.0" />
<line x1="371.5" y1="77.9" x2="371.5" y2="200.5" stroke="#343434" stroke-width="0.75" />
<line x1="365.1" y1="138.8" x2="378.3" y2="138.8" stroke="#343434" stroke-width="1.0" />
<text x="370.2" y="122.0" font-size="5.46" fill="#333" font-style="italic" textLength="24.0" lengthAdjust="spacingAndGlyphs" transform="rotate(-90 370.2 122.0)" >Перв. примен.</text>
<text x="370.2" y="180.0" font-size="5.46" fill="#333" font-style="italic" textLength="17.0" lengthAdjust="spacingAndGlyphs" transform="rotate(-90 370.2 180.0)" >Справ. №</text>
<rect x="365.1" y="224.5" width="13.2" height="150.3" fill="none" stroke="#343434" stroke-width="1.0" />
<line x1="371.5" y1="224.5" x2="371.5" y2="374.8" stroke="#343434" stroke-width="0.75" />
<line x1="365.1" y1="260.8" x2="378.3" y2="260.8" stroke="#343434" stroke-width="1.0" />
<line x1="365.1" y1="286.7" x2="378.3" y2="286.7" stroke="#343434" stroke-width="1.0" />
<line x1="365.1" y1="312.7" x2="378.3" y2="312.7" stroke="#343434" stroke-width="1.0" />
<line x1="365.1" y1="349.0" x2="378.3" y2="349.0" stroke="#343434" stroke-width="1.0" />
<text x="370.2" y="255.0" font-size="5.46" fill="#333" font-style="italic" textLength="22.0" lengthAdjust="spacingAndGlyphs" transform="rotate(-90 370.2 255.0)" >Подп. и дата</text>
<text x="370.2" y="284.5" font-size="5.46" fill="#333" font-style="italic" textLength="21.0" lengthAdjust="spacingAndGlyphs" transform="rotate(-90 370.2 284.5)" >Инв. № дубл.</text>
<text x="370.2" y="310.5" font-size="5.46" fill="#333" font-style="italic" textLength="21.0" lengthAdjust="spacingAndGlyphs" transform="rotate(-90 370.2 310.5)" >Взам. инв. №</text>
<text x="370.2" y="343.0" font-size="5.46" fill="#333" font-style="italic" textLength="22.0" lengthAdjust="spacingAndGlyphs" transform="rotate(-90 370.2 343.0)" >Подп. и дата</text>
<text x="370.2" y="372.5" font-size="5.46" fill="#333" font-style="italic" textLength="21.0" lengthAdjust="spacingAndGlyphs" transform="rotate(-90 370.2 372.5)" >Инв. № подл.</text>
<rect x="378.3" y="77.9" width="73.1" height="14.6" fill="none" stroke="#343434" stroke-width="1.0" />
<text x="0" y="0" font-size="10.6" font-style="italic" fill="#333" textLength="65.5" lengthAdjust="spacingAndGlyphs" transform="translate(445.7 81.6) rotate(180)">17ІМП.258.000001</text>
<path d="M451.2 142.6L451.2 126.8L451.8 126.0L454.0 126.0L456.3 133.6L458.3 133.6L460.6 126.0L464.1 126.0L466.4 133.6L468.4 133.6L470.7 126.0L474.2 126.0L476.5 133.6L478.5 133.6L480.8 126.0L484.3 126.0L486.6 133.6L488.6 133.6L490.9 126.0L493.0 126.0L493.6 126.8L493.6 142.6Z" fill="url(#hxa)" stroke="#343434" stroke-width="1.0" />
<path d="M451.2 277.4L451.2 292.2L451.8 293.0L454.0 293.0L456.3 285.4L458.3 285.4L460.6 293.0L464.1 293.0L466.4 285.4L468.4 285.4L470.7 293.0L474.2 293.0L476.5 285.4L478.5 285.4L480.8 293.0L484.3 293.0L486.6 285.4L488.6 285.4L490.9 293.0L493.0 293.0L493.6 292.2L493.6 277.4Z" fill="url(#hsa)" stroke="#343434" stroke-width="1.0" />
<rect x="467.0" y="142.6" width="11.8" height="12.2" fill="url(#hxa)" />
<rect x="467.0" y="174.2" width="11.8" height="15.6" fill="url(#hxa)" />
<rect x="451.2" y="189.8" width="51.1" height="5.2" fill="url(#hxa)" stroke="#343434" stroke-width="1.0" />
<rect x="451.2" y="221.7" width="51.1" height="7.6" fill="url(#hxa)" stroke="#343434" stroke-width="1.0" />
<rect x="467.0" y="229.3" width="11.8" height="14.5" fill="url(#hxa)" />
<rect x="467.0" y="263.2" width="11.8" height="14.2" fill="url(#hsa)" />
<line x1="451.2" y1="142.6" x2="451.2" y2="189.8" stroke="#343434" stroke-width="1.0" />
<line x1="451.2" y1="229.3" x2="451.2" y2="277.4" stroke="#343434" stroke-width="1.0" />
<line x1="493.6" y1="142.6" x2="493.6" y2="189.8" stroke="#343434" stroke-width="1.0" />
<line x1="493.6" y1="229.3" x2="493.6" y2="277.4" stroke="#343434" stroke-width="1.0" />
<line x1="451.2" y1="195.0" x2="451.2" y2="221.7" stroke="#343434" stroke-width="1.0" />
<line x1="502.3" y1="195.0" x2="502.3" y2="221.7" stroke="#343434" stroke-width="1.0" />
<line x1="467.0" y1="142.6" x2="467.0" y2="189.8" stroke="#343434" stroke-width="1.0" />
<line x1="467.0" y1="229.3" x2="467.0" y2="277.4" stroke="#343434" stroke-width="1.0" />
<line x1="478.8" y1="142.6" x2="478.8" y2="189.8" stroke="#343434" stroke-width="1.0" />
<line x1="478.8" y1="229.3" x2="478.8" y2="277.4" stroke="#343434" stroke-width="1.0" />
<line x1="451.2" y1="142.6" x2="467.0" y2="142.6" stroke="#343434" stroke-width="1.0" />
<line x1="478.8" y1="142.6" x2="493.6" y2="142.6" stroke="#343434" stroke-width="1.0" />
<line x1="451.2" y1="277.4" x2="467.0" y2="277.4" stroke="#343434" stroke-width="1.0" />
<line x1="478.8" y1="277.4" x2="493.6" y2="277.4" stroke="#343434" stroke-width="1.0" />
<line x1="467.0" y1="154.8" x2="478.8" y2="154.8" stroke="#343434" stroke-width="0.7000000000000001" />
<line x1="467.0" y1="174.2" x2="478.8" y2="174.2" stroke="#343434" stroke-width="0.7000000000000001" />
<line x1="467.0" y1="243.8" x2="478.8" y2="243.8" stroke="#343434" stroke-width="0.7000000000000001" />
<line x1="467.0" y1="263.2" x2="478.8" y2="263.2" stroke="#343434" stroke-width="0.7000000000000001" />
<line x1="451.2" y1="196.6" x2="502.3" y2="196.6" stroke="#343434" stroke-width="0.55" />
<line x1="451.2" y1="220.2" x2="502.3" y2="220.2" stroke="#343434" stroke-width="0.55" />
<line x1="446.0" y1="209.0" x2="507.0" y2="209.0" stroke="#343434" stroke-width="0.55" stroke-dasharray="6 1.2 1 1.2"/>
<line x1="481.6" y1="146.0" x2="481.6" y2="182.0" stroke="#343434" stroke-width="0.55" stroke-dasharray="4 1 1 1"/>
<line x1="481.6" y1="236.0" x2="481.6" y2="272.0" stroke="#343434" stroke-width="0.55" stroke-dasharray="4 1 1 1"/>
<line x1="472.9" y1="191.0" x2="472.9" y2="228.0" stroke="#343434" stroke-width="0.55" stroke-dasharray="4 1 1 1"/>
<line x1="463.0" y1="164.5" x2="484.0" y2="164.5" stroke="#343434" stroke-width="0.55" stroke-dasharray="4 1 1 1"/>
<line x1="463.0" y1="253.5" x2="484.0" y2="253.5" stroke="#343434" stroke-width="0.55" stroke-dasharray="4 1 1 1"/>
<circle cx="472.2" cy="131.2" r="22.6" fill="none" stroke="#343434" stroke-width="0.55" />
<line x1="390.1" y1="127.6" x2="451.2" y2="127.6" stroke="#343434" stroke-width="0.55" />
<line x1="390.1" y1="291.0" x2="451.2" y2="291.0" stroke="#343434" stroke-width="0.55" />
<line x1="391.6" y1="127.6" x2="391.6" y2="291.0" stroke="#343434" stroke-width="0.55" />
<path d="M391.6 127.6L392.3 130.8L390.9 130.8Z" fill="#343434"/>
<path d="M391.6 291.0L390.9 287.8L392.3 287.8Z" fill="#343434"/>
<line x1="402.3" y1="141.2" x2="451.2" y2="141.2" stroke="#343434" stroke-width="0.55" />
<line x1="402.3" y1="277.2" x2="451.2" y2="277.2" stroke="#343434" stroke-width="0.55" />
<line x1="403.8" y1="141.2" x2="403.8" y2="277.2" stroke="#343434" stroke-width="0.55" />
<path d="M403.8 141.2L404.5 144.4L403.1 144.4Z" fill="#343434"/>
<path d="M403.8 277.2L403.1 274.0L404.5 274.0Z" fill="#343434"/>
<line x1="413.4" y1="166.5" x2="451.2" y2="166.5" stroke="#343434" stroke-width="0.55" />
<line x1="413.4" y1="252.4" x2="451.2" y2="252.4" stroke="#343434" stroke-width="0.55" />
<line x1="414.9" y1="166.5" x2="414.9" y2="252.4" stroke="#343434" stroke-width="0.55" />
<path d="M414.9 166.5L415.6 169.7L414.2 169.7Z" fill="#343434"/>
<path d="M414.9 252.4L414.2 249.2L415.6 249.2Z" fill="#343434"/>
<line x1="424.5" y1="189.8" x2="451.2" y2="189.8" stroke="#343434" stroke-width="0.55" />
<line x1="424.5" y1="228.6" x2="451.2" y2="228.6" stroke="#343434" stroke-width="0.55" />
<line x1="426.0" y1="189.8" x2="426.0" y2="228.6" stroke="#343434" stroke-width="0.55" />
<path d="M426.0 189.8L426.7 193.0L425.3 193.0Z" fill="#343434"/>
<path d="M426.0 228.6L425.3 225.4L426.7 225.4Z" fill="#343434"/>
<text x="390.3" y="217.0" font-size="4.94" fill="#333" font-style="italic" textLength="28.0" lengthAdjust="spacingAndGlyphs" transform="rotate(-90 390.3 217.0)" >Ø 315 h9 (-0,13)</text>
<text x="402.5" y="196.0" font-size="4.94" fill="#333" font-style="italic" textLength="11.0" lengthAdjust="spacingAndGlyphs" transform="rotate(-90 402.5 196.0)" >Ø 265</text>
<text x="413.6" y="223.0" font-size="4.94" fill="#333" font-style="italic" textLength="11.0" lengthAdjust="spacingAndGlyphs" transform="rotate(-90 413.6 223.0)" >Ø 170</text>
<text x="424.7" y="213.0" font-size="4.94" fill="#333" font-style="italic" textLength="9.0" lengthAdjust="spacingAndGlyphs" transform="rotate(-90 424.7 213.0)" >Ø 75</text>
<text x="432.5" y="177.3" font-size="4.68" fill="#333" font-style="italic" textLength="9.0" lengthAdjust="spacingAndGlyphs" >2х45°</text>
<text x="431.0" y="182.6" font-size="4.42" fill="#333" font-style="italic" textLength="11.0" lengthAdjust="spacingAndGlyphs" >4 фаски</text>
<line x1="430.0" y1="178.5" x2="449.0" y2="178.5" stroke="#343434" stroke-width="0.55" />
<path d="M451.2 178.5L448.6 179.1L448.6 177.9Z" fill="#343434"/>
<line x1="454.5" y1="178.5" x2="458.0" y2="178.5" stroke="#343434" stroke-width="0.55" />
<path d="M451.2 178.5L448.6 177.9L448.6 179.1Z" fill="#343434"/>
<text x="431.0" y="200.6" font-size="4.68" fill="#333" font-style="italic" textLength="14.0" lengthAdjust="spacingAndGlyphs" >2,50х45°</text>
<text x="432.5" y="206.0" font-size="4.42" fill="#333" font-style="italic" textLength="11.0" lengthAdjust="spacingAndGlyphs" >2 фаски</text>
<line x1="430.0" y1="201.8" x2="449.0" y2="201.8" stroke="#343434" stroke-width="0.55" />
<path d="M451.2 201.8L448.6 202.4L448.6 201.2Z" fill="#343434"/>
<line x1="454.5" y1="201.8" x2="458.0" y2="201.8" stroke="#343434" stroke-width="0.55" />
<line x1="451.2" y1="147.2" x2="467.0" y2="147.2" stroke="#343434" stroke-width="0.55" />
<path d="M451.2 147.2L453.6 146.6L453.6 147.8Z" fill="#343434"/>
<path d="M467.0 147.2L464.6 147.8L464.6 146.6Z" fill="#343434"/>
<line x1="478.8" y1="147.2" x2="499.0" y2="147.2" stroke="#343434" stroke-width="0.55" />
<path d="M478.8 147.2L481.2 146.6L481.2 147.8Z" fill="#343434"/>
<path d="M493.6 147.2L491.2 147.8L491.2 146.6Z" fill="#343434"/>
<text x="459.2" y="146.2" font-size="4.68" fill="#333" text-anchor="middle" font-style="italic" textLength="4.0" lengthAdjust="spacingAndGlyphs" >30</text>
<text x="486.2" y="146.2" font-size="4.68" fill="#333" text-anchor="middle" font-style="italic" textLength="4.0" lengthAdjust="spacingAndGlyphs" >30</text>
<line x1="481.7" y1="154.8" x2="481.7" y2="174.2" stroke="#343434" stroke-width="0.55" />
<path d="M481.7 154.8L482.2 157.2L481.1 157.2Z" fill="#343434"/>
<path d="M481.7 174.2L481.1 171.8L482.2 171.8Z" fill="#343434"/>
<line x1="478.8" y1="154.8" x2="484.0" y2="154.8" stroke="#343434" stroke-width="0.55" />
<line x1="478.8" y1="174.2" x2="484.0" y2="174.2" stroke="#343434" stroke-width="0.55" />
<text x="486.4" y="171.5" font-size="4.68" fill="#333" font-style="italic" textLength="9.0" lengthAdjust="spacingAndGlyphs" transform="rotate(-90 486.4 171.5)" >Ø 38</text>
<text x="490.2" y="172.5" font-size="4.42" fill="#333" font-style="italic" textLength="10.0" lengthAdjust="spacingAndGlyphs" transform="rotate(-90 490.2 172.5)" >4 отв.</text>
<line x1="480.4" y1="187.9" x2="517.9" y2="167.2" stroke="#343434" stroke-width="0.55" />
<path d="M480.4 187.9L482.7 185.9L483.3 187.0Z" fill="#343434"/>
<text x="503.0" y="172.5" font-size="4.68" fill="#333" font-style="italic" textLength="4.5" lengthAdjust="spacingAndGlyphs" transform="rotate(-29 503.0 172.5)" >45</text>
<text x="500.5" y="180.3" font-size="4.42" fill="#333" font-style="italic" textLength="13.0" lengthAdjust="spacingAndGlyphs" transform="rotate(-29 500.5 180.3)" >4 отвори</text>
<rect x="468.0" y="92.8" width="24.0" height="6.8" fill="#fff" stroke="#343434" stroke-width="0.75" /><line x1="476.0" y1="92.8" x2="476.0" y2="99.6" stroke="#343434" stroke-width="0.65" /><line x1="485.0" y1="92.8" x2="485.0" y2="99.6" stroke="#343434" stroke-width="0.65" /><line x1="470.2" y1="98.2" x2="473.8" y2="94.2" stroke="#343434" stroke-width="0.65" /><text x="480.5" y="97.5" font-size="4.68" fill="#333" text-anchor="middle" font-style="italic" textLength="5.7" lengthAdjust="spacingAndGlyphs" >0,1</text><text x="488.5" y="97.5" font-size="4.68" fill="#333" text-anchor="middle" font-style="italic" textLength="1.9" lengthAdjust="spacingAndGlyphs" >А</text>
<rect x="507.6" y="104.5" width="27.0" height="7.0" fill="#fff" stroke="#343434" stroke-width="0.75" /><line x1="515.6" y1="104.5" x2="515.6" y2="111.5" stroke="#343434" stroke-width="0.65" /><line x1="527.6" y1="104.5" x2="527.6" y2="111.5" stroke="#343434" stroke-width="0.65" /><line x1="509.8" y1="110.1" x2="513.4" y2="105.9" stroke="#343434" stroke-width="0.65" /><text x="521.6" y="109.4" font-size="4.68" fill="#333" text-anchor="middle" font-style="italic" textLength="7.6" lengthAdjust="spacingAndGlyphs" >0,08</text><text x="531.1" y="109.4" font-size="4.68" fill="#333" text-anchor="middle" font-style="italic" textLength="1.9" lengthAdjust="spacingAndGlyphs" >А</text>
<rect x="506.8" y="145.4" width="26.2" height="7.3" fill="#fff" stroke="#343434" stroke-width="0.75" /><line x1="514.8" y1="145.4" x2="514.8" y2="152.7" stroke="#343434" stroke-width="0.65" /><line x1="526.3" y1="145.4" x2="526.3" y2="152.7" stroke="#343434" stroke-width="0.65" /><line x1="509.0" y1="151.3" x2="512.6" y2="146.8" stroke="#343434" stroke-width="0.65" /><text x="520.5" y="150.6" font-size="4.68" fill="#333" text-anchor="middle" font-style="italic" textLength="7.6" lengthAdjust="spacingAndGlyphs" >0,12</text><text x="529.6" y="150.6" font-size="4.68" fill="#333" text-anchor="middle" font-style="italic" textLength="1.9" lengthAdjust="spacingAndGlyphs" >А</text>
<line x1="468.0" y1="99.6" x2="454.3" y2="125.2" stroke="#343434" stroke-width="0.55" />
<path d="M453.9 125.9L454.7 122.9L455.9 123.6Z" fill="#343434"/>
<text x="500.2" y="105.8" font-size="11" fill="#333" font-style="italic" textLength="6.6" lengthAdjust="spacingAndGlyphs" >В</text>
<line x1="492.2" y1="119.5" x2="503.5" y2="108.0" stroke="#343434" stroke-width="0.55" />
<line x1="503.5" y1="108.0" x2="507.6" y2="108.0" stroke="#343434" stroke-width="0.55" />
<line x1="493.6" y1="126.0" x2="536.5" y2="126.0" stroke="#343434" stroke-width="0.55" />
<line x1="493.6" y1="291.0" x2="536.5" y2="291.0" stroke="#343434" stroke-width="0.55" />
<line x1="534.2" y1="111.5" x2="534.2" y2="291.0" stroke="#343434" stroke-width="0.55" />
<path d="M534.2 126.0L534.9 129.2L533.5 129.2Z" fill="#343434"/>
<path d="M534.2 291.0L533.5 287.8L534.9 287.8Z" fill="#343434"/>
<rect x="533.2" y="124.6" width="2.0" height="2.8" fill="#343434" />
<text x="532.6" y="216.0" font-size="4.94" fill="#333" font-style="italic" textLength="23.0" lengthAdjust="spacingAndGlyphs" transform="rotate(-90 532.6 216.0)" >Ø 324 h11</text>
<line x1="519.7" y1="152.7" x2="519.7" y2="191.5" stroke="#343434" stroke-width="0.55" />
<line x1="519.7" y1="191.5" x2="503.0" y2="191.5" stroke="#343434" stroke-width="0.55" />
<path d="M502.4 191.5L505.4 190.8L505.4 192.2Z" fill="#343434"/>
<path d="M464.1 217.4L466.7 221.4L470.7 213.1H486.2" fill="none" stroke="#343434" stroke-width="0.75" />
<text x="470.6" y="220.4" font-size="7.8" fill="#333" font-style="italic" textLength="15.0" lengthAdjust="spacingAndGlyphs" >Ra 2,5</text>
<line x1="502.3" y1="222.8" x2="513.0" y2="222.8" stroke="#343434" stroke-width="0.55" />
<line x1="511.3" y1="222.8" x2="511.3" y2="230.3" stroke="#343434" stroke-width="0.55" />
<path d="M509.7 222.8H512.9L511.3 225.4Z" fill="#343434"/>
<rect x="507.5" y="230.3" width="7.7" height="7.3" fill="#fff" stroke="#343434" stroke-width="0.75" />
<text x="511.3" y="236.2" font-size="5.46" fill="#333" text-anchor="middle" font-style="italic" >А</text>
<path d="M502.5 245.4L507.5 251.6H530.1" fill="none" stroke="#343434" stroke-width="0.65" />
<path d="M502.5 245.4L504.6 247.0L503.7 247.8Z" fill="#343434"/>
<path d="M507.5 248.9L510 251.6L515.2 242.8H530.8" fill="none" stroke="#343434" stroke-width="0.75" />
<text x="515.4" y="249.9" font-size="7" fill="#333" font-style="italic" textLength="15.2" lengthAdjust="spacingAndGlyphs" >Ra 3,2</text>
<line x1="451.2" y1="292.0" x2="451.2" y2="315.0" stroke="#343434" stroke-width="0.55" />
<line x1="493.6" y1="292.0" x2="493.6" y2="305.0" stroke="#343434" stroke-width="0.55" />
<line x1="502.3" y1="229.3" x2="502.3" y2="315.0" stroke="#343434" stroke-width="0.55" />
<line x1="451.2" y1="302.6" x2="493.6" y2="302.6" stroke="#343434" stroke-width="0.55" />
<path d="M451.2 302.6L454.4 301.9L454.4 303.3Z" fill="#343434"/>
<path d="M493.6 302.6L490.4 303.3L490.4 301.9Z" fill="#343434"/>
<line x1="451.2" y1="312.8" x2="502.3" y2="312.8" stroke="#343434" stroke-width="0.55" />
<path d="M451.2 312.8L454.4 312.1L454.4 313.5Z" fill="#343434"/>
<path d="M502.3 312.8L499.1 313.5L499.1 312.1Z" fill="#343434"/>
<text x="472.4" y="301.6" font-size="4.68" fill="#333" text-anchor="middle" font-style="italic" textLength="4.5" lengthAdjust="spacingAndGlyphs" >87</text>
<text x="476.7" y="311.8" font-size="4.68" fill="#333" text-anchor="middle" font-style="italic" textLength="6.0" lengthAdjust="spacingAndGlyphs" >100</text>
<circle cx="595.0" cy="208.6" r="16.0" fill="none" stroke="#343434" stroke-width="0.65" />
<circle cx="595.0" cy="208.6" r="14.3" fill="#fff" stroke="#343434" stroke-width="1.0" />
<rect x="590.6" y="191.8" width="8.0" height="4.0" fill="#fff" />
<path d="M590.6 195.1V191.8H598.6V195.1" fill="none" stroke="#343434" stroke-width="1.0" />
<line x1="576.0" y1="208.6" x2="614.0" y2="208.6" stroke="#343434" stroke-width="0.55" stroke-dasharray="5 1 1 1"/>
<line x1="595.0" y1="189.0" x2="595.0" y2="228.0" stroke="#343434" stroke-width="0.55" stroke-dasharray="5 1 1 1"/>
<line x1="590.6" y1="191.8" x2="590.6" y2="172.4" stroke="#343434" stroke-width="0.55" />
<line x1="598.6" y1="191.8" x2="598.6" y2="172.4" stroke="#343434" stroke-width="0.55" />
<line x1="580.8" y1="174.5" x2="604.5" y2="174.5" stroke="#343434" stroke-width="0.55" />
<path d="M590.6 174.5L588.0 175.1L588.0 173.9Z" fill="#343434"/>
<path d="M598.6 174.5L601.2 173.9L601.2 175.1Z" fill="#343434"/>
<text x="566.3" y="173.2" font-size="4.68" fill="#333" font-style="italic" textLength="18.5" lengthAdjust="spacingAndGlyphs" >14 JS9 (±0,021)</text>
<rect x="555.7" y="174.5" width="27.0" height="7.0" fill="#fff" stroke="#343434" stroke-width="0.75" /><line x1="562.2" y1="174.5" x2="562.2" y2="181.5" stroke="#343434" stroke-width="0.65" /><line x1="576.2" y1="174.5" x2="576.2" y2="181.5" stroke="#343434" stroke-width="0.65" /><line x1="556.6" y1="180.1" x2="558.8" y2="175.9" stroke="#343434" stroke-width="0.65" /><line x1="559.2" y1="180.1" x2="561.4" y2="175.9" stroke="#343434" stroke-width="0.65" /><text x="569.2" y="179.4" font-size="4.68" fill="#333" text-anchor="middle" font-style="italic" textLength="9.5" lengthAdjust="spacingAndGlyphs" >0,023</text><text x="579.5" y="179.4" font-size="4.68" fill="#333" text-anchor="middle" font-style="italic" textLength="1.9" lengthAdjust="spacingAndGlyphs" >А</text>
<rect x="555.7" y="181.5" width="27.0" height="7.0" fill="#fff" stroke="#343434" stroke-width="0.75" /><line x1="562.2" y1="181.5" x2="562.2" y2="188.5" stroke="#343434" stroke-width="0.65" /><line x1="576.2" y1="181.5" x2="576.2" y2="188.5" stroke="#343434" stroke-width="0.65" /><line x1="557.0" y1="185.0" x2="561.0" y2="185.0" stroke="#343434" stroke-width="0.65" /><line x1="557.8" y1="183.8" x2="560.2" y2="183.8" stroke="#343434" stroke-width="0.55" /><line x1="557.8" y1="186.2" x2="560.2" y2="186.2" stroke="#343434" stroke-width="0.55" /><text x="569.2" y="186.4" font-size="4.68" fill="#333" text-anchor="middle" font-style="italic" textLength="9.5" lengthAdjust="spacingAndGlyphs" >T0,14</text><text x="579.5" y="186.4" font-size="4.68" fill="#333" text-anchor="middle" font-style="italic" textLength="1.9" lengthAdjust="spacingAndGlyphs" >А</text>
<line x1="582.7" y1="178.0" x2="590.6" y2="178.0" stroke="#343434" stroke-width="0.55" />
<text x="553.6" y="203.3" font-size="4.68" fill="#333" font-style="italic" textLength="24.0" lengthAdjust="spacingAndGlyphs" >Ø 50 H7 (+0,025)</text>
<line x1="553.0" y1="204.7" x2="579.3" y2="204.7" stroke="#343434" stroke-width="0.55" />
<line x1="579.3" y1="204.7" x2="609.2" y2="212.5" stroke="#343434" stroke-width="0.55" />
<path d="M581.2 205.2L584.3 205.4L584.0 206.5Z" fill="#343434"/>
<path d="M608.8 212.4L605.7 212.2L606.0 211.1Z" fill="#343434"/>
<line x1="598.0" y1="193.0" x2="624.0" y2="193.0" stroke="#343434" stroke-width="0.55" />
<line x1="598.0" y1="223.4" x2="624.0" y2="223.4" stroke="#343434" stroke-width="0.55" />
<line x1="622.1" y1="193.0" x2="622.1" y2="223.4" stroke="#343434" stroke-width="0.55" />
<path d="M622.1 193.0L622.7 195.8L621.5 195.8Z" fill="#343434"/>
<path d="M622.1 223.4L621.5 220.6L622.7 220.6Z" fill="#343434"/>
<text x="620.6" y="216.0" font-size="4.68" fill="#333" font-style="italic" textLength="15.0" lengthAdjust="spacingAndGlyphs" transform="rotate(-90 620.6 216.0)" >53,8 (+0,2)</text>
<path d="M665.2 178.5L665.2 153.6Q665.2 151.6 666.6 151.6L668.9 151.6Q669.7 151.6 670.0 152.5L674.6 167.5L679.8 167.5L684.4 152.5Q684.7 151.6 685.5 151.6L688.8 151.6Q689.6 151.6 689.9 152.5L694.5 167.5L699.7 167.5L704.3 152.5Q704.6 151.6 705.4 151.6L708.6 151.6Q709.4 151.6 709.7 152.5L714.3 167.5L719.5 167.5L724.1 152.5Q724.4 151.6 725.2 151.6L728.5 151.6Q729.3 151.6 729.6 152.5L734.2 167.5L739.4 167.5L744.0 152.5Q744.3 151.6 745.1 151.6L747.4 151.6Q748.8 151.6 748.8 153.6L748.8 178.5Q748.8 181.5 745.8 181.5L723.4 181.5Q719.9 181.5 719.9 185.0L719.9 211.0L696.0 211.0L696.0 185.0Q696.0 181.5 692.5 181.5L668.2 181.5Q665.2 181.5 665.2 178.5Z" fill="url(#hda)" stroke="#343434" stroke-width="1.1" />
<path d="M665.2 180A43.3 43.3 0 0 0 748.8 180" fill="none" stroke="#343434" stroke-width="0.65" />
<line x1="661.0" y1="154.9" x2="778.0" y2="154.9" stroke="#343434" stroke-width="0.55" stroke-dasharray="7 1.2 1 1.2"/>
<line x1="748.8" y1="151.6" x2="778.0" y2="151.6" stroke="#343434" stroke-width="0.55" />
<line x1="738.0" y1="158.2" x2="778.0" y2="158.2" stroke="#343434" stroke-width="0.55" />
<line x1="740.0" y1="167.5" x2="778.0" y2="167.5" stroke="#343434" stroke-width="0.55" />
<line x1="776.5" y1="138.0" x2="776.5" y2="192.0" stroke="#343434" stroke-width="0.55" />
<path d="M776.5 151.6L776.0 149.0L777.0 149.0Z" fill="#343434"/>
<path d="M776.5 158.2L777.0 160.8L776.0 160.8Z" fill="#343434"/>
<path d="M776.5 167.5L776.0 164.9L777.0 164.9Z" fill="#343434"/>
<text x="775.2" y="148.5" font-size="4.68" fill="#333" font-style="italic" textLength="9.0" lengthAdjust="spacingAndGlyphs" transform="rotate(-90 775.2 148.5)" >4,50</text>
<text x="775.2" y="188.0" font-size="4.68" fill="#333" font-style="italic" textLength="15.0" lengthAdjust="spacingAndGlyphs" transform="rotate(-90 775.2 188.0)" >10,8 min</text>
<line x1="677.2" y1="146.0" x2="677.2" y2="172.0" stroke="#343434" stroke-width="0.55" stroke-dasharray="4 1 1 1"/>
<line x1="697.1" y1="146.0" x2="697.1" y2="172.0" stroke="#343434" stroke-width="0.55" stroke-dasharray="4 1 1 1"/>
<line x1="716.9" y1="146.0" x2="716.9" y2="172.0" stroke="#343434" stroke-width="0.55" stroke-dasharray="4 1 1 1"/>
<line x1="736.8" y1="146.0" x2="736.8" y2="172.0" stroke="#343434" stroke-width="0.55" stroke-dasharray="4 1 1 1"/>
<line x1="736.8" y1="170.0" x2="724.2" y2="141.6" stroke="#343434" stroke-width="0.55" />
<line x1="736.8" y1="170.0" x2="749.4" y2="141.6" stroke="#343434" stroke-width="0.55" />
<path d="M724.2 141.6Q736.8 137.4 749.4 141.6" fill="none" stroke="#343434" stroke-width="0.55" />
<text x="737.0" y="137.6" font-size="4.68" fill="#333" text-anchor="middle" font-style="italic" textLength="12.0" lengthAdjust="spacingAndGlyphs" >36° ±1°</text>
<text x="694.6" y="129.6" font-size="9.2" fill="#333" font-style="italic" textLength="27.0" lengthAdjust="spacingAndGlyphs" >В (М1:1)</text>
<path d="M650.8 139.6L653.8 143.7L658.4 135.6H675" fill="none" stroke="#343434" stroke-width="0.75" />
<text x="659.2" y="142.6" font-size="7.4" fill="#333" font-style="italic" textLength="14.4" lengthAdjust="spacingAndGlyphs" >Ra 2,5</text>
<line x1="654.3" y1="143.7" x2="675.5" y2="143.7" stroke="#343434" stroke-width="0.55" />
<line x1="675.5" y1="143.7" x2="684.9" y2="152.2" stroke="#343434" stroke-width="0.55" />
<path d="M685.2 152.5L682.7 151.1L683.5 150.2Z" fill="#343434"/>
<text x="690.8" y="149.5" font-size="4.42" fill="#333" font-style="italic" textLength="4.0" lengthAdjust="spacingAndGlyphs" transform="rotate(-56 690.8 149.5)" >R1</text>
<text x="693.8" y="151.0" font-size="4.42" fill="#333" font-style="italic" textLength="15.0" lengthAdjust="spacingAndGlyphs" transform="rotate(-56 693.8 151.0)" >10 радіусів</text>
<line x1="665.2" y1="183.0" x2="665.2" y2="228.5" stroke="#343434" stroke-width="0.55" />
<line x1="677.2" y1="183.0" x2="677.2" y2="228.5" stroke="#343434" stroke-width="0.55" />
<line x1="736.8" y1="183.0" x2="736.8" y2="228.5" stroke="#343434" stroke-width="0.55" />
<line x1="748.8" y1="183.0" x2="748.8" y2="228.5" stroke="#343434" stroke-width="0.55" />
<line x1="659.5" y1="226.3" x2="755.5" y2="226.3" stroke="#343434" stroke-width="0.55" />
<path d="M665.2 226.3L662.4 226.9L662.4 225.8Z" fill="#343434"/>
<path d="M677.2 226.3L680.0 225.8L680.0 226.9Z" fill="#343434"/>
<path d="M677.2 226.3L674.4 225.8L674.4 226.9Z" fill="#343434"/>
<path d="M736.8 226.3L734.0 226.9L734.0 225.8Z" fill="#343434"/>
<path d="M748.8 226.3L751.6 225.8L751.6 226.9Z" fill="#343434"/>
<text x="664.5" y="225.0" font-size="4.29" fill="#333" font-style="italic" textLength="11.5" lengthAdjust="spacingAndGlyphs" >12,5 ±0,3</text>
<text x="707.0" y="225.0" font-size="4.68" fill="#333" text-anchor="middle" font-style="italic" textLength="12.0" lengthAdjust="spacingAndGlyphs" >67 ±0,4</text>
<text x="737.3" y="225.0" font-size="4.29" fill="#333" font-style="italic" textLength="11.5" lengthAdjust="spacingAndGlyphs" >12,5 ±0,3</text>
<line x1="716.9" y1="172.0" x2="716.9" y2="219.0" stroke="#343434" stroke-width="0.55" />
<line x1="716.9" y1="216.6" x2="736.8" y2="216.6" stroke="#343434" stroke-width="0.55" />
<path d="M716.9 216.6L719.5 216.0L719.5 217.2Z" fill="#343434"/>
<path d="M736.8 216.6L734.2 217.2L734.2 216.0Z" fill="#343434"/>
<text x="727.0" y="215.4" font-size="4.68" fill="#333" text-anchor="middle" font-style="italic" textLength="11.5" lengthAdjust="spacingAndGlyphs" >19 ±0,4</text>
<path d="M731.4 91L735 96.5L741.5 84.5H779.6" fill="none" stroke="#343434" stroke-width="0.8" />
<text x="741.6" y="94.2" font-size="11.4" fill="#333" font-style="italic" textLength="26.0" lengthAdjust="spacingAndGlyphs" >Ra 6,3</text>
<text x="767.8" y="95.8" font-size="11.4" fill="#555" font-style="italic" textLength="3.0" lengthAdjust="spacingAndGlyphs" >(</text>
<text x="778.0" y="95.8" font-size="11.4" fill="#555" font-style="italic" textLength="3.0" lengthAdjust="spacingAndGlyphs" >)</text>
<path d="M770.6 91.4L772.8 95L777.6 86.8" fill="none" stroke="#444" stroke-width="0.75" />
<text x="597.2" y="259.3" font-size="8.4" fill="#333" font-style="italic" textLength="129.4" lengthAdjust="spacingAndGlyphs" >1 Припускається виготовлення з чавуну СЧ 20</text>
<text x="597.2" y="268.6" font-size="8.4" fill="#333" font-style="italic" textLength="42.7" lengthAdjust="spacingAndGlyphs" >2 ISO 2768 – m</text>
<text x="597.2" y="277.8" font-size="8.4" fill="#333" font-style="italic" textLength="167.3" lengthAdjust="spacingAndGlyphs" >3 На робочих поверхнях шква раковини та шпаристості не</text>
<text x="597.2" y="286.0" font-size="8.4" fill="#333" font-style="italic" textLength="42.1" lengthAdjust="spacingAndGlyphs" >припускаються</text>
<text x="597.2" y="295.9" font-size="8.4" fill="#333" font-style="italic" textLength="158.1" lengthAdjust="spacingAndGlyphs" >4 Шків піддати статичному балансуванню, дисбаланс не</text>
<text x="597.2" y="304.1" font-size="8.4" fill="#333" font-style="italic" textLength="35.9" lengthAdjust="spacingAndGlyphs" >більше 3 г*м</text>
<rect x="594.7" y="318.0" width="191.7" height="56.8" fill="none" stroke="#343434" stroke-width="1.0" />
<line x1="602.0" y1="318.0" x2="602.0" y2="343.8" stroke="#343434" stroke-width="1.0" />
<line x1="612.4" y1="318.0" x2="612.4" y2="374.8" stroke="#343434" stroke-width="1.0" />
<line x1="636.3" y1="318.0" x2="636.3" y2="374.8" stroke="#343434" stroke-width="1.0" />
<line x1="651.8" y1="318.0" x2="651.8" y2="374.8" stroke="#343434" stroke-width="1.0" />
<line x1="662.2" y1="318.0" x2="662.2" y2="374.8" stroke="#343434" stroke-width="1.0" />
<line x1="594.7" y1="323.2" x2="662.2" y2="323.2" stroke="#343434" stroke-width="0.65" />
<line x1="594.7" y1="328.3" x2="662.2" y2="328.3" stroke="#343434" stroke-width="0.65" />
<line x1="594.7" y1="333.5" x2="662.2" y2="333.5" stroke="#343434" stroke-width="0.65" />
<line x1="594.7" y1="338.7" x2="662.2" y2="338.7" stroke="#343434" stroke-width="1.0" />
<line x1="594.7" y1="343.8" x2="662.2" y2="343.8" stroke="#343434" stroke-width="1.0" />
<line x1="594.7" y1="349.0" x2="662.2" y2="349.0" stroke="#343434" stroke-width="0.65" />
<line x1="594.7" y1="354.1" x2="662.2" y2="354.1" stroke="#343434" stroke-width="0.65" />
<line x1="594.7" y1="359.3" x2="662.2" y2="359.3" stroke="#343434" stroke-width="0.65" />
<line x1="594.7" y1="364.5" x2="662.2" y2="364.5" stroke="#343434" stroke-width="0.65" />
<line x1="594.7" y1="369.6" x2="662.2" y2="369.6" stroke="#343434" stroke-width="0.65" />
<line x1="662.2" y1="333.5" x2="786.4" y2="333.5" stroke="#343434" stroke-width="1.0" />
<line x1="662.2" y1="359.3" x2="786.4" y2="359.3" stroke="#343434" stroke-width="1.0" />
<line x1="734.9" y1="333.5" x2="734.9" y2="374.8" stroke="#343434" stroke-width="1.0" />
<line x1="734.9" y1="338.7" x2="786.4" y2="338.7" stroke="#343434" stroke-width="1.0" />
<line x1="734.9" y1="354.1" x2="786.4" y2="354.1" stroke="#343434" stroke-width="1.0" />
<line x1="750.5" y1="333.5" x2="750.5" y2="354.1" stroke="#343434" stroke-width="1.0" />
<line x1="768.1" y1="333.5" x2="768.1" y2="354.1" stroke="#343434" stroke-width="1.0" />
<line x1="740.1" y1="338.7" x2="740.1" y2="354.1" stroke="#343434" stroke-width="0.65" />
<line x1="745.3" y1="338.7" x2="745.3" y2="354.1" stroke="#343434" stroke-width="0.65" />
<line x1="755.6" y1="354.1" x2="755.6" y2="359.3" stroke="#343434" stroke-width="1.0" />
<text x="693.5" y="328.4" font-size="10.4" fill="#333" font-style="italic" textLength="63.6" lengthAdjust="spacingAndGlyphs" >17ІМП.258.000001</text>
<text x="699.2" y="344.6" font-size="10" fill="#333" text-anchor="middle" font-style="italic" textLength="16.6" lengthAdjust="spacingAndGlyphs" >Шків</text>
<text x="699.2" y="355.6" font-size="10" fill="#333" text-anchor="middle" font-style="italic" textLength="30.8" lengthAdjust="spacingAndGlyphs" >ведений</text>
<text x="666.5" y="368.4" font-size="5.46" fill="#333" font-style="italic" textLength="65.8" lengthAdjust="spacingAndGlyphs" >Сплав АК Мg2,5 ДСТУ ISO 209-1:2002</text>
<text x="737.7" y="369.2" font-size="7" fill="#333" font-style="italic" textLength="46.3" lengthAdjust="spacingAndGlyphs" >ТДАТУ, ІМКП, 2023</text>
<text x="742.7" y="337.6" font-size="4.68" fill="#333" text-anchor="middle" font-style="italic" textLength="7.0" lengthAdjust="spacingAndGlyphs" >Літ.</text>
<text x="759.3" y="337.6" font-size="4.68" fill="#333" text-anchor="middle" font-style="italic" textLength="10.0" lengthAdjust="spacingAndGlyphs" >Маса</text>
<text x="777.2" y="337.6" font-size="4.68" fill="#333" text-anchor="middle" font-style="italic" textLength="15.0" lengthAdjust="spacingAndGlyphs" >Масштаб</text>
<text x="735.8" y="351.2" font-size="7" fill="#333" font-style="italic" textLength="3.6" lengthAdjust="spacingAndGlyphs" >У</text>
<text x="758.4" y="351.4" font-size="7.4" fill="#333" text-anchor="middle" font-style="italic" textLength="9.4" lengthAdjust="spacingAndGlyphs" >7,41</text>
<text x="777.2" y="351.4" font-size="7.4" fill="#333" text-anchor="middle" font-style="italic" textLength="7.8" lengthAdjust="spacingAndGlyphs" >1:2</text>
<text x="745.0" y="358.3" font-size="4.68" fill="#333" text-anchor="middle" font-style="italic" textLength="10.0" lengthAdjust="spacingAndGlyphs" >Аркуш</text>
<text x="770.0" y="358.3" font-size="4.68" fill="#333" text-anchor="middle" font-style="italic" textLength="17.0" lengthAdjust="spacingAndGlyphs" >Аркушів  1</text>
<text x="595.3" y="342.7" font-size="4.16" fill="#333" font-style="italic" textLength="5.0" lengthAdjust="spacingAndGlyphs" >Зм.</text>
<text x="602.6" y="342.7" font-size="4.16" fill="#333" font-style="italic" textLength="7.0" lengthAdjust="spacingAndGlyphs" >Арк.</text>
<text x="616.0" y="342.7" font-size="4.16" fill="#333" font-style="italic" textLength="15.0" lengthAdjust="spacingAndGlyphs" >№ докум.</text>
<text x="639.0" y="342.7" font-size="4.16" fill="#333" font-style="italic" textLength="9.0" lengthAdjust="spacingAndGlyphs" >Підп.</text>
<text x="652.6" y="342.7" font-size="4.16" fill="#333" font-style="italic" textLength="8.5" lengthAdjust="spacingAndGlyphs" >Дата</text>
<text x="595.5" y="347.9" font-size="4.29" fill="#333" font-style="italic" textLength="13.3" lengthAdjust="spacingAndGlyphs" >Розроб.</text>
<text x="613.2" y="347.9" font-size="4.29" fill="#333" font-style="italic" textLength="10.0" lengthAdjust="spacingAndGlyphs" >Зелен</text>
<text x="595.5" y="353.0" font-size="4.29" fill="#333" font-style="italic" textLength="11.4" lengthAdjust="spacingAndGlyphs" >Перев.</text>
<text x="613.2" y="353.0" font-size="4.29" fill="#333" font-style="italic" textLength="22.0" lengthAdjust="spacingAndGlyphs" >Чернявський</text>
<text x="595.5" y="358.2" font-size="4.29" fill="#333" font-style="italic" textLength="14.0" lengthAdjust="spacingAndGlyphs" >Т.контр.</text>
<text x="595.5" y="368.5" font-size="4.29" fill="#333" font-style="italic" textLength="14.0" lengthAdjust="spacingAndGlyphs" >Н.контр.</text>
<text x="613.2" y="368.5" font-size="4.29" fill="#333" font-style="italic" textLength="12.0" lengthAdjust="spacingAndGlyphs" >Дереза</text>
<text x="595.5" y="373.7" font-size="4.29" fill="#333" font-style="italic" textLength="9.5" lengthAdjust="spacingAndGlyphs" >Затв.</text>
<text x="613.2" y="373.7" font-size="4.29" fill="#333" font-style="italic" textLength="14.0" lengthAdjust="spacingAndGlyphs" >Вершков</text>
<text x="666.5" y="378.8" font-size="4.94" fill="#333" font-style="italic" textLength="19.0" lengthAdjust="spacingAndGlyphs" >Копіював</text>
<text x="758.2" y="378.8" font-size="4.94" fill="#333" font-style="italic" textLength="21.0" lengthAdjust="spacingAndGlyphs" >Формат А3</text>
<text x="776.4" y="391.6" font-size="9.4" fill="#1c2a74" font-weight="bold" textLength="10.0" lengthAdjust="spacingAndGlyphs" >15</text>
<rect x="877.8" y="65.6" width="6.4" height="331.8" fill="#f0f0f0" />
<rect x="878.6" y="67.4" width="5.0" height="5.0" fill="#fff" stroke="#c8c8c8" stroke-width="0.4" />
<path d="M880 70.8H882.2L881.1 69.2Z" fill="#444" stroke="none" stroke-width="0.6" />
<rect x="878.4" y="357.5" width="5.4" height="19.0" fill="#fff" stroke="#cfcfcf" stroke-width="0.4" />
<rect x="878.6" y="377.2" width="5.0" height="5.0" fill="#fff" stroke="#c8c8c8" stroke-width="0.4" />
<path d="M880 379H882.2L881.1 380.6Z" fill="#333" stroke="none" stroke-width="0.6" />
<path d="M880 387H882.2L881.1 385.2Z M880 388.6H882.2L881.1 386.8Z" fill="#555" stroke="none" stroke-width="0.6" />
<path d="M880 391.2H882.2L881.1 393Z M880 392.8H882.2L881.1 394.6Z" fill="#555" stroke="none" stroke-width="0.6" />
</g>
<g filter="url(#soft2)">
<path d="M14.5 10.2L19.2 11.8V15.2Q19.2 18.6 14.5 20.2Q9.8 18.6 9.8 15.2V11.8Z" fill="#23d160" stroke="none" stroke-width="0.6" />
<path d="M12.4 15L14 16.8L16.9 13.4" fill="none" stroke="#1b1b1b" stroke-width="1.1" stroke-linecap="round" stroke-linejoin="round"/>
<defs><radialGradient id="rg"><stop offset="0" stop-color="#ff6a5e"/><stop offset="0.6" stop-color="#f0564b"/><stop offset="0.8" stop-color="#a03a33" stop-opacity="0.7"/><stop offset="1" stop-color="#5a2320" stop-opacity="0"/></radialGradient></defs>
<circle cx="36.9" cy="15.3" r="6.2" fill="url(#rg)" />
<rect x="34.6" y="14.6" width="4.6" height="1.4" fill="#ffd5cf" rx="0.7" />
<text x="47.2" y="18.6" font-size="8.8" fill="#f4f4f4" font-weight="bold" textLength="25.9" lengthAdjust="spacingAndGlyphs" >Запись</text>
<circle cx="23.3" cy="374.9" r="14.6" fill="#1e2021" stroke="#27292a" stroke-width="0.8" />
<g transform="rotate(-45 23 375)"><rect x="17" y="373" width="12.5" height="4.2" rx="2.1" fill="none" stroke="#2fcf66" stroke-width="1.1"/><line x1="26.6" y1="373" x2="26.6" y2="377.2" stroke="#2fcf66" stroke-width="0.9"/></g>
<rect x="34.4" y="403.4" width="3.8" height="7.4" fill="#c9c9c9" rx="1.9" />
<path d="M32.6 408.6Q32.6 412.4 36.3 412.4Q40 412.4 40 408.6 M36.3 412.4V415 M34.4 415.2H38.2" fill="none" stroke="#c9c9c9" stroke-width="0.9" />
<line x1="29.6" y1="414.6" x2="43.4" y2="402.4" stroke="#e0474b" stroke-width="1.2" />
<path d="M61.5 411.90000000000003L63.9 409.40000000000003L66.3 411.90000000000003" fill="none" stroke="#cfcfcf" stroke-width="1.0" />
<text x="7.0" y="428.9" font-size="8.0" fill="#e2e2e2" textLength="59.4" lengthAdjust="spacingAndGlyphs" >Включить звук</text>
<rect x="105.2" y="405.0" width="12.4" height="9.6" fill="#c9c9c9" rx="2" />
<path d="M118.4 408.6L122.6 405.8V413.8L118.4 411Z" fill="#c9c9c9" stroke="none" stroke-width="0.6" />
<path d="M145.4 411.90000000000003L147.8 409.40000000000003L150.20000000000002 411.90000000000003" fill="none" stroke="#cfcfcf" stroke-width="1.0" />
<text x="77.7" y="428.9" font-size="8.0" fill="#e2e2e2" textLength="72.6" lengthAdjust="spacingAndGlyphs" >Остановить видео</text>
<circle cx="313.0" cy="406.6" r="2.9" fill="#c9c9c9" />
<path d="M307.8 415.6Q307.8 410.4 313 410.4Q318.2 410.4 318.2 415.6Z" fill="#c9c9c9" stroke="none" stroke-width="0.6" />
<circle cx="319.8" cy="407.4" r="2.3" fill="#c9c9c9" />
<path d="M319.2 410.8Q323.8 410.4 323.8 415.6H319.6Z" fill="#c9c9c9" stroke="none" stroke-width="0.6" />
<text x="326.7" y="411.2" font-size="8.2" fill="#e2e2e2" textLength="10.5" lengthAdjust="spacingAndGlyphs" >20</text>
<path d="M350.1 411.90000000000003L352.5 409.40000000000003L354.9 411.90000000000003" fill="none" stroke="#cfcfcf" stroke-width="1.0" />
<text x="294.9" y="428.9" font-size="8.0" fill="#e2e2e2" textLength="41.0" lengthAdjust="spacingAndGlyphs" >Участники</text>
<path d="M387.4 403.6H400Q402.2 403.6 402.2 405.8V411.6Q402.2 413.8 400 413.8H393.4L389.6 417V413.8H387.4Q385.4 413.8 385.4 411.6V405.8Q385.4 403.6 387.4 403.6Z" fill="#b0b0b0" stroke="none" stroke-width="0.6" />
<circle cx="401.4" cy="404.6" r="5.3" fill="#f0424a" stroke="#1b1b1b" stroke-width="0.8" />
<text x="401.4" y="407.4" font-size="7.4" fill="#fff" text-anchor="middle" font-weight="bold" >1</text>
<path d="M414.40000000000003 411.90000000000003L416.8 409.40000000000003L419.2 411.90000000000003" fill="none" stroke="#cfcfcf" stroke-width="1.0" />
<text x="386.3" y="428.9" font-size="8.0" fill="#e2e2e2" textLength="13.5" lengthAdjust="spacingAndGlyphs" >Чат</text>
<rect x="465.8" y="403.8" width="17.4" height="12.6" fill="#23d959" rx="2.6" />
<path d="M474.5 413.4V407 M471.6 409.6L474.5 406.6L477.4 409.6" fill="none" stroke="#10331c" stroke-width="1.4" />
<text x="431.9" y="428.9" font-size="8.0" fill="#2ed760" textLength="86.7" lengthAdjust="spacingAndGlyphs" >Демонстрация экрана</text>
<circle cx="553.1" cy="409.6" r="6.6" fill="none" stroke="#c9c9c9" stroke-width="1.1" />
<circle cx="553.1" cy="409.6" r="4.2" fill="#c9c9c9" />
<text x="539.4" y="428.9" font-size="8.0" fill="#e2e2e2" textLength="27.5" lengthAdjust="spacingAndGlyphs" >Запись</text>
<rect x="617.0" y="403.8" width="16.8" height="12.0" fill="#c9c9c9" rx="2.2" />
<text x="625.4" y="412.6" font-size="6.8" fill="#1b1b1b" text-anchor="middle" font-weight="bold" textLength="9.0" lengthAdjust="spacingAndGlyphs" >CC</text>
<path d="M657.2 411.90000000000003L659.6 409.40000000000003L662.0 411.90000000000003" fill="none" stroke="#cfcfcf" stroke-width="1.0" />
<text x="587.7" y="428.9" font-size="8.0" fill="#e2e2e2" textLength="75.7" lengthAdjust="spacingAndGlyphs" >Показать субтитры</text>
<circle cx="696.8" cy="411.0" r="5.4" fill="#c9c9c9" />
<circle cx="694.8" cy="409.6" r="0.8" fill="#1b1b1b" />
<circle cx="698.8" cy="409.6" r="0.8" fill="#1b1b1b" />
<path d="M694.2 412.2Q696.8 414.8 699.4 412.2" fill="none" stroke="#1b1b1b" stroke-width="0.8" />
<path d="M702.8 402.6V406.6M700.8 404.6H704.8" fill="none" stroke="#c9c9c9" stroke-width="0.9" />
<text x="680.9" y="428.9" font-size="8.0" fill="#e2e2e2" textLength="32.6" lengthAdjust="spacingAndGlyphs" >Реакции</text>
<path d="M755 404.6H753.4Q751.6 404.6 751.6 406.4V408 M759.6 416.4H761.2Q763 416.4 763 414.6V413" fill="none" stroke="#c9c9c9" stroke-width="1.0" />
<circle cx="760.6" cy="407.0" r="1.9" fill="none" stroke="#c9c9c9" stroke-width="1.0" />
<circle cx="754.0" cy="414.0" r="1.9" fill="none" stroke="#c9c9c9" stroke-width="1.0" />
<text x="732.0" y="428.9" font-size="8.0" fill="#e2e2e2" textLength="51.9" lengthAdjust="spacingAndGlyphs" >Приложения</text>
<rect x="921.6" y="407.5" width="43.9" height="17.6" fill="#c6262e" rx="4" />
<text x="943.5" y="419.5" font-size="8.4" fill="#fff" text-anchor="middle" font-weight="bold" textLength="27.0" lengthAdjust="spacingAndGlyphs" >Выйти</text>
<defs><linearGradient id="tk" x1="0" x2="1"><stop offset="0" stop-color="#313925"/><stop offset="0.5" stop-color="#373e2a"/><stop offset="1" stop-color="#353d28"/></linearGradient></defs>
<rect x="0.0" y="434.8" width="974.0" height="29.2" fill="url(#tk)" />
<rect x="279.8" y="434.8" width="33.6" height="29.2" fill="#5d6353" />
<rect x="10.8" y="443.6" width="5.6" height="5.4" fill="#f2f2f2" />
<rect x="17.2" y="443.6" width="6.2" height="5.4" fill="#f2f2f2" />
<rect x="10.8" y="449.8" width="5.6" height="5.6" fill="#f2f2f2" />
<rect x="17.2" y="449.8" width="6.2" height="5.6" fill="#f2f2f2" />
<circle cx="53.6" cy="447.8" r="3.6" fill="none" stroke="#f2f2f2" stroke-width="1.1" />
<line x1="51.0" y1="450.6" x2="46.0" y2="455.2" stroke="#f2f2f2" stroke-width="1.2" />
<rect x="80.0" y="445.0" width="9.0" height="8.4" fill="none" stroke="#f2f2f2" stroke-width="1.1" />
<line x1="79.4" y1="443.4" x2="89.6" y2="443.4" stroke="#f2f2f2" stroke-width="1" />
<line x1="79.4" y1="455.0" x2="89.6" y2="455.0" stroke="#f2f2f2" stroke-width="1" />
<rect x="91.0" y="445.0" width="1.4" height="1.6" fill="#f2f2f2" />
<line x1="91.7" y1="448.6" x2="91.7" y2="453.6" stroke="#f2f2f2" stroke-width="1.1" />
<circle cx="122.0" cy="449.6" r="8.2" fill="#1c5fae" stroke="#2f8fee" stroke-width="1.8" />
<path d="M117.6 445.4H122.2M117.6 445.4V450 M117.8 445.6L126.4 454.4 M126.4 449.6V454.4H121.6" fill="none" stroke="#8cc6ff" stroke-width="1.3" />
<path d="M148.6 442.6H154L155.4 444.2H164.6V456.4H148.6Z" fill="#f5c04a" stroke="none" stroke-width="0.6" />
<rect x="148.6" y="446.6" width="16.0" height="9.8" fill="#fbd872" />
<rect x="153.0" y="451.0" width="7.4" height="5.4" fill="#3e8fd8" />
<rect x="155.0" y="453.4" width="3.4" height="3.0" fill="#fbd872" />
<path d="M186 444.6H190Q188.8 441.6 191.6 441.4Q194.4 441.6 193.2 444.6H197.4V448.6Q200.6 447.4 200.8 450.4Q200.6 453.4 197.4 452.2V456.8H193Q194.2 453.8 191.4 453.8Q188.8 453.8 190 456.8H186V452.4Q182.8 453.6 182.8 450.6Q182.8 447.6 186 448.8Z" fill="#f4f4f4" stroke="#d0d0d0" stroke-width="0.4" />
<rect x="218.4" y="442.4" width="11.0" height="14.6" fill="#fafafa" stroke="#9aa" stroke-width="0.4" rx="1" transform="rotate(-8 224 450)"/>
<rect x="221.0" y="442.6" width="11.0" height="14.6" fill="#fff" stroke="#99a" stroke-width="0.4" rx="1" />
<path d="M226.4 446Q231 450 228.6 452.4Q227.4 453 226.8 452L227.6 454.6H225.2L226 452Q225.4 453 224.2 452.4Q221.8 450 226.4 446Z" fill="#16263f" stroke="none" stroke-width="0.6" />
<path d="M231.4 441.6V445.2M229.6 443.4H233.2" fill="none" stroke="#4aa3ef" stroke-width="0.9" />
<circle cx="261.5" cy="449.6" r="8.4" fill="#e33b2e" />
<path d="M261.5 449.6L254.3 445.4A8.4 8.4 0 0 0 258.2 457.3Z" fill="#2ba24c" stroke="none" stroke-width="0.6" />
<path d="M261.5 449.6L258.2 457.3A8.4 8.4 0 0 0 269.8 448.2Z" fill="#fbc116" stroke="none" stroke-width="0.6" />
<path d="M261.5 449.6L254.3 445.4A8.4 8.4 0 0 1 269.8 448.2Z" fill="#e33b2e" stroke="none" stroke-width="0.6" />
<circle cx="261.5" cy="449.6" r="3.9" fill="#fff" />
<circle cx="261.5" cy="449.6" r="3.0" fill="#3f7fe8" />
<rect x="287.6" y="441.2" width="17.0" height="17.0" fill="#0b5cff" rx="6.4" />
<text x="296.1" y="451.2" font-size="4.2" fill="#fff" text-anchor="middle" font-weight="bold" textLength="9.6" lengthAdjust="spacingAndGlyphs" >zoom</text>
<rect x="324.4" y="441.4" width="13.0" height="16.4" fill="#5f7287" rx="0.8" />
<rect x="325.8" y="443.0" width="10.2" height="3.4" fill="#bfe1f5" />
<rect x="325.8" y="447.6" width="2.8" height="2.5" fill="#e8eef3" />
<rect x="325.8" y="450.8" width="2.8" height="2.5" fill="#e8eef3" />
<rect x="325.8" y="454.0" width="2.8" height="2.5" fill="#e8eef3" />
<rect x="329.3" y="447.6" width="2.8" height="2.5" fill="#e8eef3" />
<rect x="329.3" y="450.8" width="2.8" height="2.5" fill="#e8eef3" />
<rect x="329.3" y="454.0" width="2.8" height="2.5" fill="#e8eef3" />
<rect x="332.8" y="447.6" width="2.8" height="2.5" fill="#2e74c9" />
<rect x="332.8" y="450.8" width="2.8" height="2.5" fill="#2e74c9" />
<rect x="332.8" y="454.0" width="2.8" height="2.5" fill="#2e74c9" />
<rect x="359.6" y="441.6" width="10.6" height="9.4" fill="#2a5fc4" stroke="#cfd6e2" stroke-width="0.9" transform="skewY(6) translate(0 -38)"/>
<path d="M362 454.6H371.6L373 456.6H361Z" fill="#c9ccd2" stroke="none" stroke-width="0.6" />
<circle cx="370.6" cy="454.8" r="3.4" fill="#dfe3e8" stroke="#9aa" stroke-width="0.3" />
<circle cx="370.6" cy="454.8" r="1.7" fill="#57b947" />
<rect x="393.2" y="441.4" width="16.0" height="16.4" fill="#0d5bf0" />
<path d="M398 444.3L400.6 446L398 447.7L395.4 446Z" fill="#fff" stroke="none" stroke-width="0.6" />
<path d="M404.4 444.3L407.0 446L404.4 447.7L401.79999999999995 446Z" fill="#fff" stroke="none" stroke-width="0.6" />
<path d="M398 448.5L400.6 450.2L398 451.9L395.4 450.2Z" fill="#fff" stroke="none" stroke-width="0.6" />
<path d="M404.4 448.5L407.0 450.2L404.4 451.9L401.79999999999995 450.2Z" fill="#fff" stroke="none" stroke-width="0.6" />
<path d="M401.2 452.3L403.8 454L401.2 455.7L398.59999999999997 454Z" fill="#fff" stroke="none" stroke-width="0.6" />
<rect x="428.6" y="444.6" width="15.0" height="3.6" fill="#8b3fa6" />
<rect x="428.6" y="448.2" width="15.0" height="3.4" fill="#2d6fc4" />
<rect x="428.6" y="451.6" width="15.0" height="3.6" fill="#3f9f3f" />
<rect x="428.6" y="455.0" width="15.0" height="1.4" fill="#5a3a1a" />
<rect x="434.6" y="444.0" width="3.0" height="11.6" fill="#c9a24a" />
<rect x="434.2" y="448.4" width="3.8" height="2.6" fill="#e6cf7a" stroke="#6b5320" stroke-width="0.3" />
<rect x="463.0" y="442.0" width="15.6" height="15.8" fill="#d9dde2" stroke="#a8adb5" stroke-width="0.5" rx="3.4" />
<circle cx="470.8" cy="449.8" r="5.4" fill="#f3a43a" />
<path d="M465.6 451.2Q470.8 445.6 476 448.6Q474 453.8 465.6 451.2Z" fill="#e0562a" stroke="none" stroke-width="0.6" />
<path d="M466.4 452.6Q471 455.6 475.4 452.2" fill="none" stroke="#5aa03a" stroke-width="1.2" />
<rect x="499.6" y="441.8" width="12.0" height="15.6" fill="#f3f6fb" stroke="#b8c4d8" stroke-width="0.4" />
<rect x="497.4" y="444.6" width="10.4" height="9.6" fill="#2456a8" />
<text x="502.6" y="452.6" font-size="8" fill="#fff" text-anchor="middle" font-weight="bold" textLength="8.0" lengthAdjust="spacingAndGlyphs" >W</text>
<rect x="507.8" y="446.0" width="3.0" height="1.0" fill="#6d8fd0" />
<rect x="507.8" y="448.4" width="3.0" height="1.0" fill="#6d8fd0" />
<rect x="142.8" y="462.6" width="27.5" height="1.4" fill="#e6ebc8" />
<rect x="248.2" y="462.6" width="28.0" height="1.4" fill="#e6ebc8" />
<rect x="279.8" y="462.6" width="33.6" height="1.4" fill="#e6ebc8" />
<rect x="317.6" y="462.6" width="28.0" height="1.4" fill="#e6ebc8" />
<rect x="457.5" y="462.6" width="28.0" height="1.4" fill="#e6ebc8" />
<rect x="492.7" y="462.6" width="27.5" height="1.4" fill="#e6ebc8" />
<path d="M834.4 450.8L837.8 447.2L841.2 450.8" fill="none" stroke="#f2f2f2" stroke-width="1" />
<rect x="853.0" y="445.0" width="7.6" height="5.6" fill="none" stroke="#f2f2f2" stroke-width="0.9" />
<line x1="855.0" y1="452.6" x2="859.0" y2="452.6" stroke="#f2f2f2" stroke-width="0.9" />
<line x1="857.0" y1="450.6" x2="857.0" y2="452.6" stroke="#f2f2f2" stroke-width="0.8" />
<rect x="850.8" y="444.0" width="2.6" height="3.4" fill="#2d3423" stroke="#f2f2f2" stroke-width="0.7" />
<text x="868.5" y="452.0" font-size="6.8" fill="#f2f2f2" textLength="14.8" lengthAdjust="spacingAndGlyphs" >УКР</text>
<text x="912.8" y="445.4" font-size="6.8" fill="#f2f2f2" text-anchor="middle" textLength="17.5" lengthAdjust="spacingAndGlyphs" >14:48</text>
<text x="912.5" y="458.6" font-size="6.8" fill="#f2f2f2" text-anchor="middle" textLength="38.4" lengthAdjust="spacingAndGlyphs" >20.04.2023</text>
<path d="M945.6 444.6H955.4V452.4H952.2L950.4 454.4L948.6 452.4H945.6Z" fill="none" stroke="#f2f2f2" stroke-width="0.9" />
</g>
</svg>
</body></html>
